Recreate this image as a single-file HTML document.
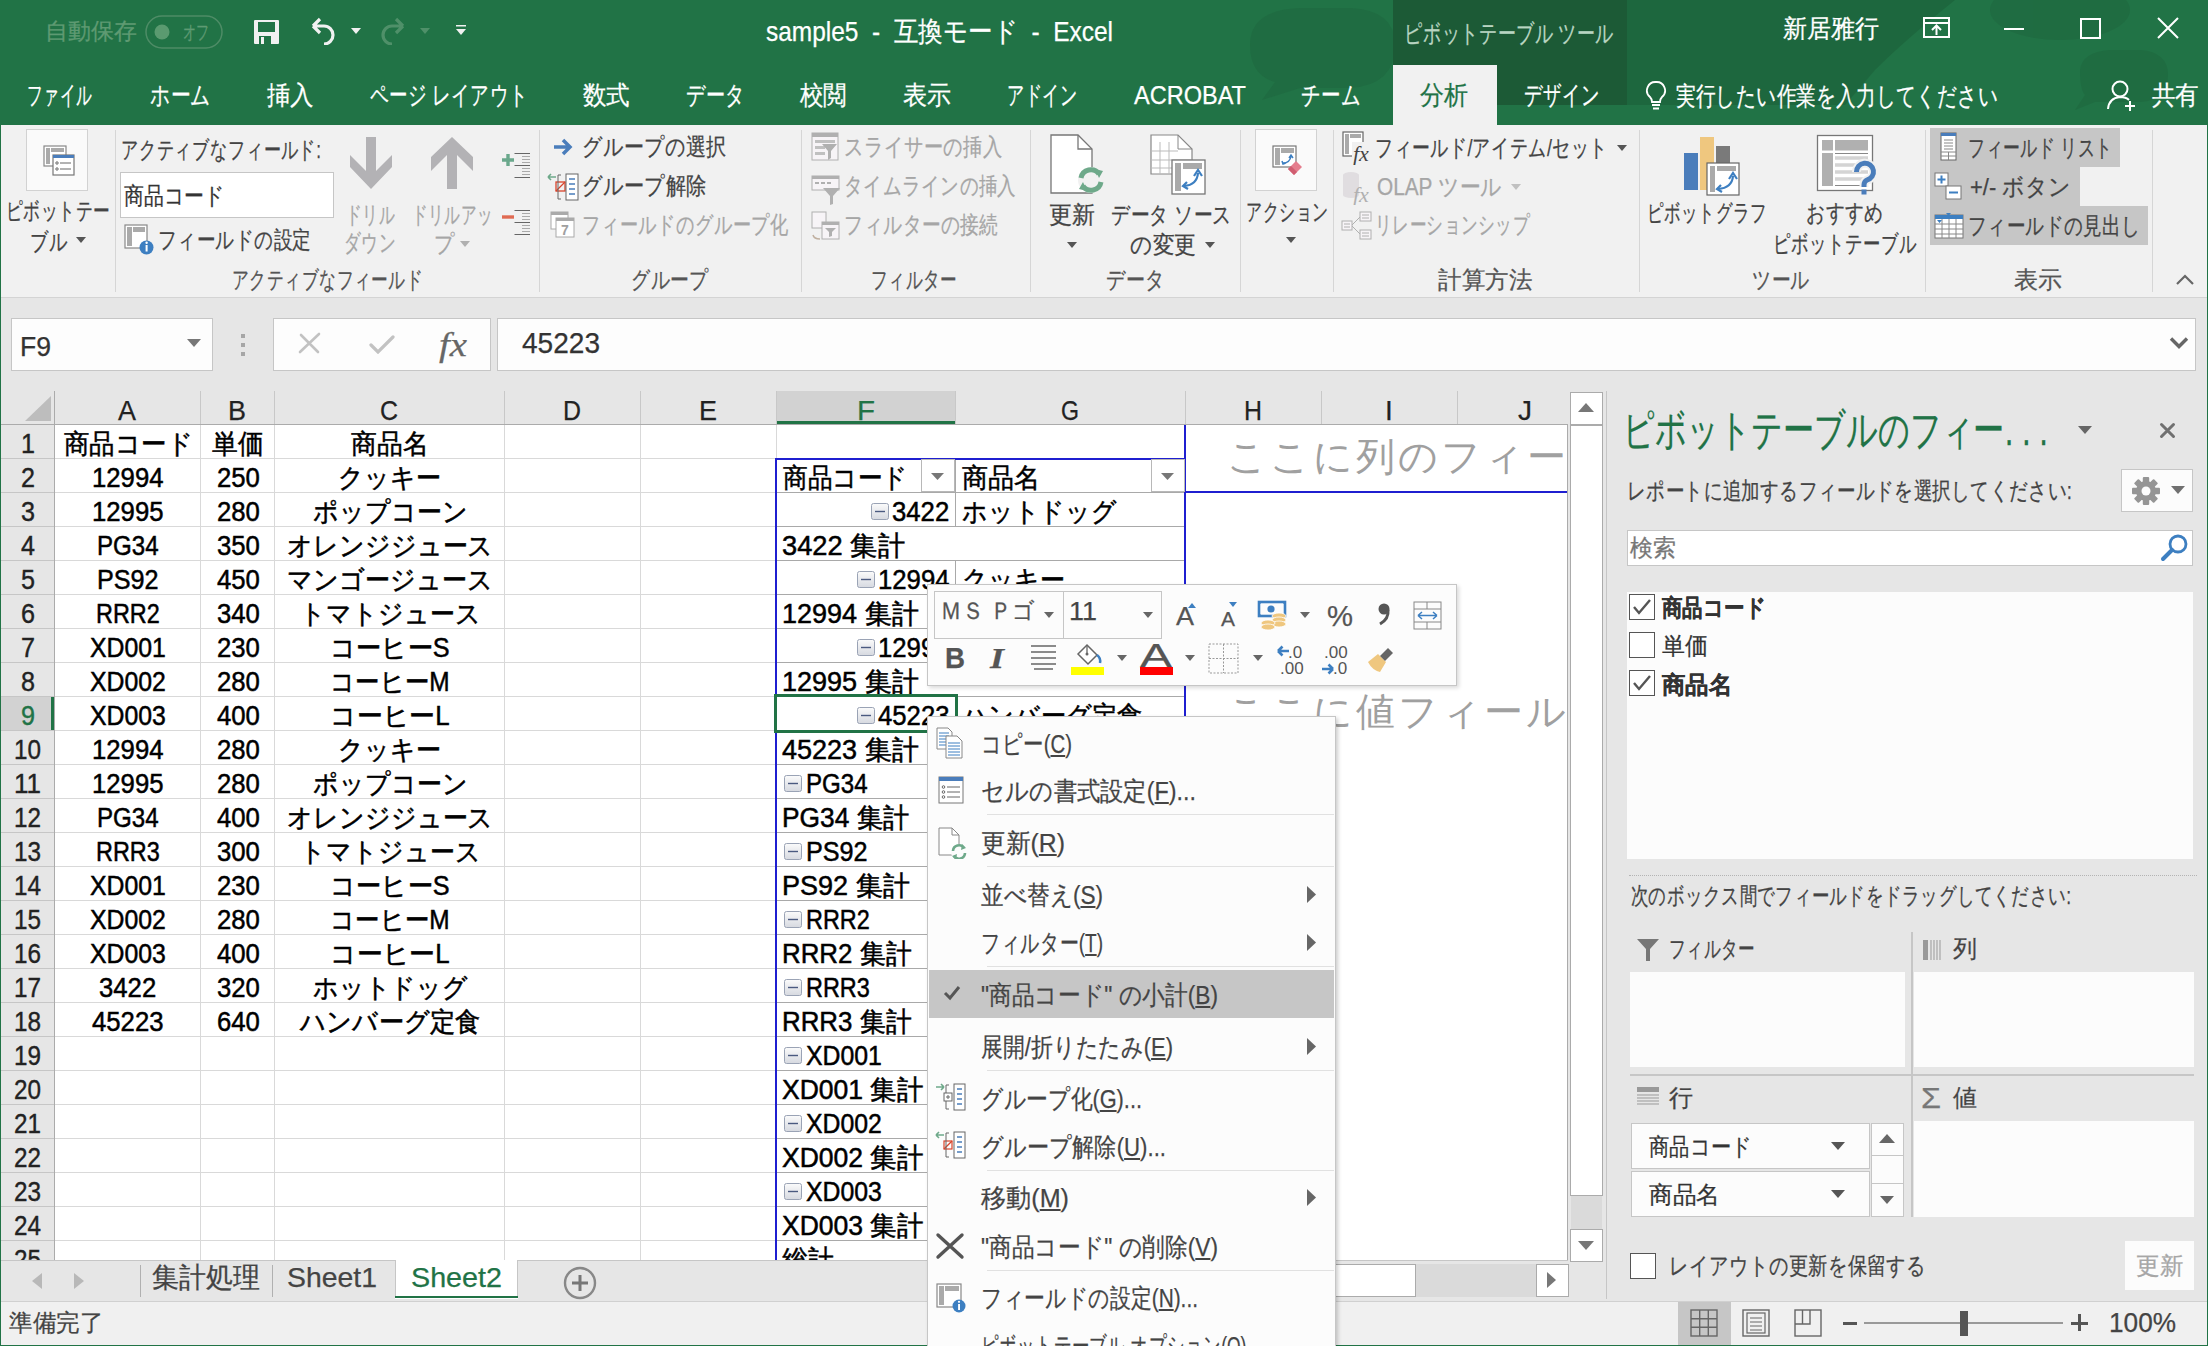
<!DOCTYPE html>
<html><head><meta charset="utf-8"><style>
html,body{margin:0;padding:0;}
body{width:2208px;height:1346px;position:relative;overflow:hidden;background:#fff;font-family:'Liberation Sans', sans-serif;}
.b{position:absolute;box-sizing:border-box;}
.t{position:absolute;white-space:pre;line-height:1;transform-origin:0 50%;}
</style></head><body>
<div class="b" style="left:0px;top:0px;width:2208px;height:1346px;background:#fff;"></div>
<div class="b" style="left:0px;top:0px;width:2208px;height:125px;background:#217346;"></div>
<svg class="b" style="left:0;top:0" width="2208" height="125"><g fill="#1d623b" opacity="0.4"><path d="M1250 45 Q1250 10 1300 8 H1350 Q1395 10 1395 45 Q1395 85 1350 88 H1300 L1262 100 L1275 82 Q1250 75 1250 45 Z"/><path d="M2080 70 Q2082 52 2110 50 H2140 Q2168 52 2168 75 Q2168 100 2140 102 H2095 L2075 110 L2085 95 Q2080 90 2080 70 Z"/><ellipse cx="2060" cy="10" rx="70" ry="30"/></g><path d="M1627 0 H1955 Q1905 40 1875 70 L1845 105 H1627 Z" fill="#1d623b" opacity="0.7"/></svg>
<div class="b" style="left:1393px;top:0px;width:234px;height:105px;background:#1c5a36;"></div>
<div class="b" style="left:1393px;top:65px;width:104px;height:60px;background:#f1f1f1;"></div>
<div class="b" style="left:0px;top:125px;width:2208px;height:172px;background:#f1f1f1;"></div>
<div class="b" style="left:0px;top:297px;width:2208px;height:1px;background:#d4d4d4;"></div>
<div class="b" style="left:0px;top:298px;width:2208px;height:93px;background:#e6e6e6;"></div>
<div class="t" style="top:19.5px;font-size:23px;color:#5e9a72;-webkit-text-stroke:0.25px #5e9a72;left:45.0px;">自動保存</div>
<svg class="b" style="left:145px;top:15px" width="78" height="34"><rect x="1" y="1" width="76" height="32" rx="16" fill="none" stroke="#4e8c66" stroke-width="1.5"/><circle cx="17" cy="17" r="7.5" fill="#5a9a70"/></svg>
<div class="t" style="top:22.0px;font-size:20px;color:#5e9a72;-webkit-text-stroke:0.25px #5e9a72;left:183.0px;transform:scaleX(0.6500);">オフ</div>
<svg class="b" style="left:253px;top:19px;" width="27" height="26" viewBox="0 0 27 26"><path d="M1 2 Q1 1 2 1 H25 Q26 1 26 2 V24 Q26 25 25 25 H2 Q1 25 1 24 Z" fill="#f1f1f1"/><rect x="5" y="3" width="17" height="10" fill="#217346"/><rect x="6" y="17" width="12" height="8" fill="#217346"/><rect x="8" y="18" width="3" height="7" fill="#f1f1f1"/></svg>
<svg class="b" style="left:309px;top:17px;" width="28" height="28" viewBox="0 0 28 28"><path d="M4 9 L11 2 M4 9 L11 16 M4 9 H15 A9 9 0 0 1 15 27" fill="none" stroke="#f1f1f1" stroke-width="3.2"/></svg>
<svg class="b" style="left:351px;top:28px;" width="11" height="7" viewBox="0 0 11 7"><path d="M0 0 H10 L5 6 Z" fill="#f1f1f1"/></svg>
<svg class="b" style="left:379px;top:17px;" width="28" height="28" viewBox="0 0 28 28"><path d="M24 9 L17 2 M24 9 L17 16 M24 9 H13 A9 9 0 0 0 13 27" fill="none" stroke="#4f9069" stroke-width="3.2"/></svg>
<svg class="b" style="left:420px;top:28px;" width="11" height="7" viewBox="0 0 11 7"><path d="M0 0 H10 L5 6 Z" fill="#4f9069"/></svg>
<svg class="b" style="left:456px;top:25px;" width="11" height="11" viewBox="0 0 11 11"><rect x="0" y="0" width="10" height="1.5" fill="#f1f1f1"/><path d="M0 4 H10 L5 10 Z" fill="#f1f1f1"/></svg>
<div class="t" style="top:18.0px;font-size:28px;color:#fff;-webkit-text-stroke:0.25px #fff;left:766.0px;transform:scaleX(0.8736);">sample5  -  互換モード  -  Excel</div>
<div class="t" style="top:20.5px;font-size:25px;color:#b9d5c2;-webkit-text-stroke:0.25px #b9d5c2;left:1404.0px;transform:scaleX(0.7218);">ピボットテーブル ツール</div>
<div class="t" style="top:15.5px;font-size:25px;color:#fff;-webkit-text-stroke:0.25px #fff;left:1783.0px;transform:scaleX(0.9600);">新居雅行</div>
<svg class="b" style="left:1923px;top:17px;" width="27" height="21" viewBox="0 0 27 21"><rect x="1" y="1" width="25" height="19" fill="none" stroke="#fff" stroke-width="2"/><path d="M1 6 H26" stroke="#fff" stroke-width="2"/><path d="M13.5 18 V9 M9 13 L13.5 8.5 L18 13" fill="none" stroke="#fff" stroke-width="2"/></svg>
<div class="b" style="left:2004px;top:28px;width:20px;height:2px;background:#fff;"></div>
<svg class="b" style="left:2080px;top:18px;" width="21" height="21" viewBox="0 0 21 21"><rect x="1" y="1" width="19" height="19" fill="none" stroke="#fff" stroke-width="2"/></svg>
<svg class="b" style="left:2157px;top:17px;" width="22" height="22" viewBox="0 0 22 22"><path d="M1 1 L21 21 M21 1 L1 21" stroke="#fff" stroke-width="2"/></svg>
<div class="t" style="top:82.0px;font-size:26px;color:#fff;-webkit-text-stroke:0.25px #fff;left:27.0px;transform:scaleX(0.6019);">ファイル</div>
<div class="t" style="top:82.0px;font-size:26px;color:#fff;-webkit-text-stroke:0.25px #fff;left:150.0px;transform:scaleX(0.7625);">ホーム</div>
<div class="t" style="top:82.0px;font-size:26px;color:#fff;-webkit-text-stroke:0.25px #fff;left:267.0px;transform:scaleX(0.9038);">挿入</div>
<div class="t" style="top:82.0px;font-size:26px;color:#fff;-webkit-text-stroke:0.25px #fff;left:370.0px;transform:scaleX(0.7110);">ページ レイアウト</div>
<div class="t" style="top:82.0px;font-size:26px;color:#fff;-webkit-text-stroke:0.25px #fff;left:583.0px;transform:scaleX(0.9038);">数式</div>
<div class="t" style="top:82.0px;font-size:26px;color:#fff;-webkit-text-stroke:0.25px #fff;left:686.0px;transform:scaleX(0.7375);">データ</div>
<div class="t" style="top:82.0px;font-size:26px;color:#fff;-webkit-text-stroke:0.25px #fff;left:800.0px;transform:scaleX(0.9038);">校閲</div>
<div class="t" style="top:82.0px;font-size:26px;color:#fff;-webkit-text-stroke:0.25px #fff;left:903.0px;transform:scaleX(0.9231);">表示</div>
<div class="t" style="top:82.0px;font-size:26px;color:#fff;-webkit-text-stroke:0.25px #fff;left:1007.0px;transform:scaleX(0.6574);">アドイン</div>
<div class="t" style="top:82.0px;font-size:26px;color:#fff;-webkit-text-stroke:0.25px #fff;left:1134.0px;transform:scaleX(0.9049);">ACROBAT</div>
<div class="t" style="top:82.0px;font-size:26px;color:#fff;-webkit-text-stroke:0.25px #fff;left:1301.0px;transform:scaleX(0.7500);">チーム</div>
<div class="t" style="top:82.0px;font-size:26px;color:#fff;-webkit-text-stroke:0.25px #fff;left:1524.0px;transform:scaleX(0.7037);">デザイン</div>
<div class="t" style="top:82.0px;font-size:26px;color:#217346;-webkit-text-stroke:0.25px #217346;left:1420.0px;transform:scaleX(0.9231);">分析</div>
<svg class="b" style="left:1645px;top:80px;" width="22" height="31" viewBox="0 0 22 31"><path d="M11 2 A8.5 8.5 0 0 0 5 17 Q7 19 7 22 H15 Q15 19 17 17 A8.5 8.5 0 0 0 11 2 Z" fill="none" stroke="#fff" stroke-width="1.8"/><path d="M7 25 H15 M8 28.5 H14" stroke="#fff" stroke-width="1.8"/></svg>
<div class="t" style="top:83.0px;font-size:26px;color:#fff;-webkit-text-stroke:0.25px #fff;left:1676.0px;transform:scaleX(0.7559);">実行したい作業を入力してください</div>
<svg class="b" style="left:2106px;top:79px;" width="33" height="33" viewBox="0 0 33 33"><circle cx="14" cy="10" r="7.5" fill="none" stroke="#fff" stroke-width="2"/><path d="M2 30 Q3 19 14 18 Q20 18 23 21" fill="none" stroke="#fff" stroke-width="2"/><path d="M24 22 V32 M19 27 H29" stroke="#fff" stroke-width="2"/></svg>
<div class="t" style="top:82.0px;font-size:26px;color:#fff;-webkit-text-stroke:0.25px #fff;left:2152.0px;transform:scaleX(0.9038);">共有</div>
<div class="b" style="left:115px;top:130px;width:1px;height:162px;background:#d6d6d6;"></div>
<div class="b" style="left:539px;top:130px;width:1px;height:162px;background:#d6d6d6;"></div>
<div class="b" style="left:801px;top:130px;width:1px;height:162px;background:#d6d6d6;"></div>
<div class="b" style="left:1030px;top:130px;width:1px;height:162px;background:#d6d6d6;"></div>
<div class="b" style="left:1240px;top:130px;width:1px;height:162px;background:#d6d6d6;"></div>
<div class="b" style="left:1333px;top:130px;width:1px;height:162px;background:#d6d6d6;"></div>
<div class="b" style="left:1639px;top:130px;width:1px;height:162px;background:#d6d6d6;"></div>
<div class="b" style="left:1925px;top:130px;width:1px;height:162px;background:#d6d6d6;"></div>
<div class="b" style="left:2152px;top:130px;width:1px;height:162px;background:#d6d6d6;"></div>
<div class="t" style="top:268.0px;font-size:24px;color:#555;-webkit-text-stroke:0.25px #555;left:231.5px;transform:scaleX(0.6971);">アクティブなフィールド</div>
<div class="t" style="top:268.0px;font-size:24px;color:#555;-webkit-text-stroke:0.25px #555;left:631.0px;transform:scaleX(0.7879);">グループ</div>
<div class="t" style="top:268.0px;font-size:24px;color:#555;-webkit-text-stroke:0.25px #555;left:871.0px;transform:scaleX(0.6935);">フィルター</div>
<div class="t" style="top:268.0px;font-size:24px;color:#555;-webkit-text-stroke:0.25px #555;left:1105.5px;transform:scaleX(0.7973);">データ</div>
<div class="t" style="top:268.0px;font-size:24px;color:#555;-webkit-text-stroke:0.25px #555;left:1438.0px;transform:scaleX(0.9792);">計算方法</div>
<div class="t" style="top:268.0px;font-size:24px;color:#555;-webkit-text-stroke:0.25px #555;left:1752.0px;transform:scaleX(0.7838);">ツール</div>
<div class="t" style="top:268.0px;font-size:24px;color:#555;-webkit-text-stroke:0.25px #555;left:2014.0px;">表示</div>
<div class="b" style="left:26px;top:129px;width:62px;height:62px;background:#fafafa;box-shadow:inset 0 0 0 1px #d2d2d2;"></div>
<svg class="b" style="left:43px;top:145px;" width="32" height="32" viewBox="0 0 32 32"><rect x="1" y="1" width="22" height="20" fill="#fff" stroke="#888" stroke-width="1.2"/><rect x="3" y="3" width="4" height="16" fill="#aaa"/><rect x="8" y="3" width="13" height="4" fill="#aaa"/><rect x="10" y="10" width="21" height="20" fill="#fff" stroke="#777" stroke-width="1.2"/><rect x="10" y="10" width="21" height="3" fill="#4a7dbb"/><circle cx="14" cy="18" r="1.2" fill="none" stroke="#666"/><circle cx="14" cy="24" r="1.2" fill="none" stroke="#666"/><path d="M17 18 H28 M17 24 H28" stroke="#666"/></svg>
<div class="t" style="top:199.0px;font-size:24px;color:#444;-webkit-text-stroke:0.25px #444;left:6.0px;transform:scaleX(0.6980);">ピボットテー</div>
<div class="t" style="top:230.0px;font-size:24px;color:#444;-webkit-text-stroke:0.25px #444;left:30.0px;transform:scaleX(0.7600);">ブル</div>
<svg class="b" style="left:76px;top:237px;" width="11" height="7" viewBox="0 0 11 7"><path d="M0 0 H10 L5 6 Z" fill="#555"/></svg>
<div class="t" style="top:138.0px;font-size:24px;color:#444;-webkit-text-stroke:0.25px #444;left:121.0px;transform:scaleX(0.7126);">アクティブなフィールド:</div>
<div class="b" style="left:120px;top:172px;width:214px;height:46px;background:#fff;box-shadow:inset 0 0 0 1px #c6c6c6;"></div>
<div class="t" style="top:184.0px;font-size:24px;color:#333;-webkit-text-stroke:0.25px #333;left:124.0px;transform:scaleX(0.8279);">商品コード</div>
<svg class="b" style="left:124px;top:224px;" width="32" height="32" viewBox="0 0 32 32"><rect x="1" y="1" width="22" height="23" fill="#fff" stroke="#888" stroke-width="1.2"/><rect x="3" y="3" width="5" height="19" fill="#aaa"/><rect x="9" y="3" width="12" height="5" fill="#aaa"/><circle cx="22.5" cy="23.5" r="7" fill="#3d7fc1"/><rect x="21.6" y="21" width="2" height="6.5" fill="#fff"/><circle cx="22.6" cy="18.8" r="1.2" fill="#fff"/></svg>
<div class="t" style="top:228.0px;font-size:24px;color:#444;-webkit-text-stroke:0.25px #444;left:158.0px;transform:scaleX(0.7766);">フィールドの設定</div>
<svg class="b" style="left:349px;top:136px;" width="44" height="54" viewBox="0 0 44 54"><path d="M17 1 H27 V35 L43 19 V31 L22 53 L1 31 V19 L17 35 Z" fill="#b3b2b5"/></svg>
<svg class="b" style="left:430px;top:136px;" width="44" height="54" viewBox="0 0 44 54"><path d="M17 53 H27 V19 L43 35 V21 L22 1 L1 21 V35 L17 19 Z" fill="#b3b2b5"/></svg>
<div class="t" style="top:203.0px;font-size:24px;color:#a6a6a6;-webkit-text-stroke:0.25px #a6a6a6;left:346.0px;transform:scaleX(0.6533);">ドリル</div>
<div class="t" style="top:231.0px;font-size:24px;color:#a6a6a6;-webkit-text-stroke:0.25px #a6a6a6;left:344.0px;transform:scaleX(0.6933);">ダウン</div>
<div class="t" style="top:203.0px;font-size:24px;color:#a6a6a6;-webkit-text-stroke:0.25px #a6a6a6;left:412.0px;transform:scaleX(0.6480);">ドリルアッ</div>
<div class="t" style="top:232.0px;font-size:24px;color:#a6a6a6;-webkit-text-stroke:0.25px #a6a6a6;left:434.0px;transform:scaleX(0.8400);">プ</div>
<svg class="b" style="left:460px;top:241px;" width="11" height="7" viewBox="0 0 11 7"><path d="M0 0 H10 L5 6 Z" fill="#b0b0b0"/></svg>
<svg class="b" style="left:500px;top:150px;" width="32" height="30" viewBox="0 0 32 30"><path d="M2 10 H14 M8 4 V16" stroke="#6aa88c" stroke-width="3.4"/><path d="M14.5 3.5 H30 M14.5 15.5 H30 M14.5 27.5 H30" stroke="#666" stroke-width="1"/><path d="M22 6.5 H30 M22 9.5 H30 M22 12.5 H30 M22 18.5 H30 M22 21.5 H30 M22 24.5 H30" stroke="#aaa" stroke-width="1"/></svg>
<svg class="b" style="left:500px;top:207px;" width="32" height="30" viewBox="0 0 32 30"><path d="M2 10 H14" stroke="#e06a52" stroke-width="3.4"/><path d="M14.5 3.5 H30 M14.5 15.5 H30 M14.5 27.5 H30" stroke="#666" stroke-width="1"/><path d="M22 6.5 H30 M22 9.5 H30 M22 12.5 H30 M22 18.5 H30 M22 21.5 H30 M22 24.5 H30" stroke="#aaa" stroke-width="1"/></svg>
<svg class="b" style="left:552px;top:137px;" width="22" height="20" viewBox="0 0 22 20"><path d="M2 10 H17 M11 3 L18 10 L11 17" fill="none" stroke="#4a7dbb" stroke-width="3.5"/></svg>
<div class="t" style="top:135.0px;font-size:24px;color:#444;-webkit-text-stroke:0.25px #444;left:582.0px;transform:scaleX(0.8372);">グループの選択</div>
<svg class="b" style="left:546px;top:172px;" width="34" height="30" viewBox="0 0 34 30"><path d="M2 5 H10 M2 5 L5 2 M2 5 L5 8" fill="none" stroke="#6ea98a" stroke-width="1.6"/><rect x="10" y="10" width="9" height="9" fill="none" stroke="#d9442b" stroke-width="1.3"/><path d="M10 19 L19 10" stroke="#d9442b" stroke-width="1.3"/><path d="M15 3 H12 V27 H15" fill="none" stroke="#666"/><rect x="20" y="2" width="12" height="26" fill="#fff" stroke="#666"/><path d="M23 7 H29 M23 12 H29 M23 17 H29 M23 22 H29" stroke="#4a7dbb" stroke-width="1.4"/></svg>
<div class="t" style="top:174.0px;font-size:24px;color:#444;-webkit-text-stroke:0.25px #444;left:582.0px;transform:scaleX(0.8435);">グループ解除</div>
<svg class="b" style="left:550px;top:211px;" width="28" height="28" viewBox="0 0 28 28"><rect x="1" y="1" width="17" height="17" fill="#fff" stroke="#aaa"/><rect x="1" y="1" width="17" height="3" fill="#aaa"/><rect x="6" y="7" width="18" height="19" fill="#fff" stroke="#aaa"/><rect x="6" y="7" width="18" height="3" fill="#aaa"/><text x="15" y="24" font-size="14" font-weight="bold" font-family="Liberation Sans" fill="#a0a0a0" text-anchor="middle">7</text></svg>
<div class="t" style="top:213.0px;font-size:24px;color:#a6a6a6;-webkit-text-stroke:0.25px #a6a6a6;left:582.0px;transform:scaleX(0.7574);">フィールドのグループ化</div>
<svg class="b" style="left:811px;top:132px;" width="28" height="30" viewBox="0 0 28 30"><rect x="1" y="1" width="26" height="27" fill="#f7f4f7" stroke="#b0b0b0"/><rect x="1" y="1" width="26" height="4" fill="#b0b0b0"/><rect x="4" y="8" width="20" height="3" fill="#c0c0c0"/><rect x="4" y="14" width="10" height="3" fill="#c0c0c0"/><rect x="4" y="20" width="10" height="3" fill="#c0c0c0"/><path d="M11 12 H26 L20 19 V26 L17 28 V19 Z" fill="#b0b0b0"/></svg>
<div class="t" style="top:135.0px;font-size:24px;color:#a6a6a6;-webkit-text-stroke:0.25px #a6a6a6;left:844.0px;transform:scaleX(0.8020);">スライサーの挿入</div>
<svg class="b" style="left:811px;top:175px;" width="30" height="30" viewBox="0 0 30 30"><rect x="1" y="1" width="27" height="14" fill="#f7f4f7" stroke="#b0b0b0"/><rect x="1" y="1" width="27" height="3" fill="#b0b0b0"/><path d="M4 8 H8 M10 8 H14 M16 8 H20" stroke="#b0b0b0" stroke-width="2"/><path d="M12 13 H29 L22 21 V29 L19 30 V21 Z" fill="#b0b0b0"/></svg>
<div class="t" style="top:174.0px;font-size:24px;color:#a6a6a6;-webkit-text-stroke:0.25px #a6a6a6;left:844.0px;transform:scaleX(0.7713);">タイムラインの挿入</div>
<svg class="b" style="left:811px;top:211px;" width="30" height="30" viewBox="0 0 30 30"><rect x="1" y="1" width="14" height="16" fill="#f7f4f7" stroke="#b0b0b0"/><rect x="11" y="11" width="17" height="17" fill="#f7f4f7" stroke="#b0b0b0"/><rect x="11" y="11" width="17" height="3" fill="#b0b0b0"/><path d="M14 17 H25 L21 21 V25 L18 26 V21 Z" fill="#b0b0b0"/><path d="M2 24 Q3 28 9 28" fill="none" stroke="#c0b0a0" stroke-width="1.5"/></svg>
<div class="t" style="top:213.0px;font-size:24px;color:#a6a6a6;-webkit-text-stroke:0.25px #a6a6a6;left:844.0px;transform:scaleX(0.7817);">フィルターの接続</div>
<svg class="b" style="left:1050px;top:134px;" width="56" height="62" viewBox="0 0 56 62"><path d="M1 1 H28 L42 15 V59 H1 Z" fill="#fff" stroke="#777" stroke-width="1.3"/><path d="M28 1 V15 H42" fill="none" stroke="#777" stroke-width="1.3"/><circle cx="41" cy="46" r="13" fill="#f1f1f1"/><path d="M31 44 A10 10 0 0 1 49 40" fill="none" stroke="#6ea98a" stroke-width="5"/><path d="M51 48 A10 10 0 0 1 33 52" fill="none" stroke="#6ea98a" stroke-width="5"/><path d="M45 35 L53 37 L49 44 Z M37 57 L29 55 L33 48 Z" fill="#6ea98a"/></svg>
<div class="t" style="top:203.0px;font-size:24px;color:#444;-webkit-text-stroke:0.25px #444;left:1049.0px;transform:scaleX(0.9583);">更新</div>
<svg class="b" style="left:1067px;top:242px;" width="11" height="7" viewBox="0 0 11 7"><path d="M0 0 H10 L5 6 Z" fill="#555"/></svg>
<svg class="b" style="left:1150px;top:134px;" width="56" height="62" viewBox="0 0 56 62"><path d="M1 1 H28 L42 15 V40 H1 Z" fill="#fff" stroke="#888" stroke-width="1.2"/><path d="M28 1 V15 H42" fill="none" stroke="#888"/><path d="M10 8 V40 M19 8 V40 M1 17 H28 M1 26 H42 M1 34 H42" stroke="#bbb"/><rect x="22" y="26" width="33" height="34" fill="#fff" stroke="#777" stroke-width="1.3"/><rect x="25" y="29" width="6" height="28" fill="#aaa"/><rect x="33" y="29" width="19" height="6" fill="#aaa"/><path d="M34 52 Q47 51 48 39" fill="none" stroke="#3d7fc1" stroke-width="2.2"/><path d="M44 42 L48 36 L52 42 M37 48 L33 52 L38 55" fill="none" stroke="#3d7fc1" stroke-width="2.2"/></svg>
<div class="t" style="top:203.0px;font-size:24px;color:#444;-webkit-text-stroke:0.25px #444;left:1111.0px;transform:scaleX(0.7823);">データ ソース</div>
<div class="t" style="top:233.0px;font-size:24px;color:#444;-webkit-text-stroke:0.25px #444;left:1130.0px;transform:scaleX(0.9041);">の変更</div>
<svg class="b" style="left:1205px;top:242px;" width="11" height="7" viewBox="0 0 11 7"><path d="M0 0 H10 L5 6 Z" fill="#555"/></svg>
<div class="b" style="left:1255px;top:129px;width:62px;height:62px;background:#fafafa;box-shadow:inset 0 0 0 1px #d2d2d2;"></div>
<svg class="b" style="left:1272px;top:145px;" width="30" height="30" viewBox="0 0 30 30"><rect x="1" y="1" width="23" height="21" fill="#fff" stroke="#777" stroke-width="1.2"/><rect x="3" y="3" width="5" height="17" fill="#aaa"/><rect x="9" y="3" width="13" height="5" fill="#aaa"/><path d="M11 18 Q18 18 19 11 M17 13 L19 10 L21 13 M10 16 L11 19 L14 18" fill="none" stroke="#3d7fc1" stroke-width="1.5"/><path d="M16 24 L24 16 L30 22 L22 30 Z" fill="#e57d8d"/><path d="M16 24 L19 21 L25 27 L22 30 Z" fill="#d05d70"/></svg>
<div class="t" style="top:200.0px;font-size:24px;color:#444;-webkit-text-stroke:0.25px #444;left:1246.0px;transform:scaleX(0.6640);">アクション</div>
<svg class="b" style="left:1286px;top:237px;" width="11" height="7" viewBox="0 0 11 7"><path d="M0 0 H10 L5 6 Z" fill="#555"/></svg>
<svg class="b" style="left:1342px;top:131px;" width="32" height="34" viewBox="0 0 32 34"><rect x="1" y="1" width="20" height="24" fill="#fff" stroke="#666" stroke-width="1.2"/><rect x="3" y="3" width="4" height="20" fill="#aaa"/><rect x="8" y="3" width="11" height="4" fill="#aaa"/><rect x="10" y="11" width="22" height="22" fill="#f1f1f1"/><text x="11" y="30" font-size="22" font-style="italic" font-family="Liberation Serif" fill="#444">fx</text></svg>
<div class="t" style="top:136.0px;font-size:24px;color:#444;-webkit-text-stroke:0.25px #444;left:1375.0px;transform:scaleX(0.7460);">フィールド/アイテム/セット</div>
<svg class="b" style="left:1617px;top:145px;" width="11" height="7" viewBox="0 0 11 7"><path d="M0 0 H10 L5 6 Z" fill="#555"/></svg>
<svg class="b" style="left:1342px;top:171px;" width="34" height="34" viewBox="0 0 34 34"><ellipse cx="9" cy="4" rx="8" ry="3" fill="#e0dde0"/><rect x="1" y="4" width="16" height="20" fill="#e0dde0"/><ellipse cx="9" cy="24" rx="8" ry="3" fill="#e0dde0"/><text x="11" y="31" font-size="22" font-style="italic" font-family="Liberation Serif" fill="#b0b0b0">fx</text></svg>
<div class="t" style="top:175.0px;font-size:24px;color:#a6a6a6;-webkit-text-stroke:0.25px #a6a6a6;left:1377.0px;transform:scaleX(0.8665);">OLAP ツール</div>
<svg class="b" style="left:1511px;top:184px;" width="11" height="7" viewBox="0 0 11 7"><path d="M0 0 H10 L5 6 Z" fill="#c0c0c0"/></svg>
<svg class="b" style="left:1341px;top:211px;" width="32" height="30" viewBox="0 0 32 30"><rect x="1" y="10" width="10" height="9" fill="#f7f4f7" stroke="#b0b0b0"/><rect x="19" y="1" width="11" height="9" fill="#f7f4f7" stroke="#b0b0b0"/><rect x="19" y="19" width="11" height="9" fill="#f7f4f7" stroke="#b0b0b0"/><path d="M11 14 L19 6 M11 15 L19 23" stroke="#b0b0b0"/><path d="M3 13 H9 M3 16 H9 M21 4 H28 M21 7 H28 M21 22 H28 M21 25 H28" stroke="#b0b0b0"/></svg>
<div class="t" style="top:213.0px;font-size:24px;color:#a6a6a6;-webkit-text-stroke:0.25px #a6a6a6;left:1375.0px;transform:scaleX(0.6920);">リレーションシップ</div>
<svg class="b" style="left:1683px;top:136px;" width="57" height="60" viewBox="0 0 57 60"><rect x="1" y="17" width="14" height="37" fill="#4a7dbb"/><rect x="17" y="1" width="14" height="53" fill="#efc77f"/><rect x="33" y="10" width="14" height="17" fill="#7a7a7a"/><rect x="24" y="27" width="32" height="32" fill="#fff" stroke="#666" stroke-width="1.2"/><rect x="27" y="30" width="5" height="26" fill="#aaa"/><rect x="34" y="30" width="19" height="5" fill="#aaa"/><path d="M35 53 Q49 52 50 40" fill="none" stroke="#3d7fc1" stroke-width="2.2"/><path d="M46 43 L50 37 L54 43 M38 49 L34 53 L39 56" fill="none" stroke="#3d7fc1" stroke-width="2.2"/></svg>
<div class="t" style="top:201.0px;font-size:24px;color:#444;-webkit-text-stroke:0.25px #444;left:1647.0px;transform:scaleX(0.6857);">ピボットグラフ</div>
<svg class="b" style="left:1816px;top:134px;" width="62" height="62" viewBox="0 0 62 62"><rect x="1.5" y="1.5" width="55" height="55" fill="#fff" stroke="#777" stroke-width="1.3"/><rect x="6" y="6" width="11" height="10.5" fill="#b0b0b0"/><rect x="19" y="6" width="33" height="10.5" fill="#b0b0b0"/><rect x="6" y="19" width="11" height="33" fill="#b0b0b0"/><path d="M19 19.5 H52 M19 51.5 H52" stroke="#888" stroke-width="1"/><path d="M19 24 H52 M19 31 H52 M19 38 H52 M19 45 H52" stroke="#d4d4d4" stroke-width="3.5"/><g transform="translate(37,28)"><path d="M3.5 10 A8.5 8.5 0 1 1 14 18 Q11 19.5 11 23 V25" fill="none" stroke="#f1f1f1" stroke-width="9"/><path d="M3.5 10 A8.5 8.5 0 1 1 14 18 Q11 19.5 11 23 V25" fill="none" stroke="#4a7dbb" stroke-width="5"/><rect x="8.5" y="27.5" width="5" height="5" fill="#4a7dbb"/></g></svg>
<div class="t" style="top:201.0px;font-size:24px;color:#444;-webkit-text-stroke:0.25px #444;left:1806.0px;transform:scaleX(0.7800);">おすすめ</div>
<div class="t" style="top:232.0px;font-size:24px;color:#444;-webkit-text-stroke:0.25px #444;left:1773.0px;transform:scaleX(0.7236);">ピボットテーブル</div>
<div class="b" style="left:1930px;top:128px;width:190px;height:39px;background:#c6c6c6;"></div>
<div class="b" style="left:1930px;top:167px;width:150px;height:39px;background:#c6c6c6;"></div>
<div class="b" style="left:1930px;top:206px;width:218px;height:39px;background:#c6c6c6;"></div>
<svg class="b" style="left:1940px;top:132px;" width="18" height="30" viewBox="0 0 18 30"><rect x="1" y="1" width="15" height="27" fill="#fff" stroke="#666"/><rect x="1" y="1" width="15" height="3" fill="#4a7dbb"/><path d="M4 8 H13 M4 11 H13 M4 14 H13 M4 17 H13 M1 20 H16 M1 24 H16 M8.5 20 V28" stroke="#888"/></svg>
<div class="t" style="top:136.0px;font-size:24px;color:#444;-webkit-text-stroke:0.25px #444;left:1968.0px;transform:scaleX(0.7050);">フィールド リスト</div>
<svg class="b" style="left:1934px;top:172px;" width="30" height="30" viewBox="0 0 30 30"><rect x="1" y="1" width="13" height="13" fill="#fff" stroke="#777"/><path d="M3.5 7.5 H11.5 M7.5 3.5 V11.5" stroke="#3d7fc1" stroke-width="2"/><rect x="12" y="14" width="15" height="13" fill="#fff" stroke="#777"/><path d="M15 20.5 H24" stroke="#3d7fc1" stroke-width="2"/></svg>
<div class="t" style="top:175.0px;font-size:24px;color:#444;-webkit-text-stroke:0.25px #444;left:1970.0px;transform:scaleX(0.9153);">+/- ボタン</div>
<svg class="b" style="left:1934px;top:211px;" width="31" height="29" viewBox="0 0 31 29"><rect x="1" y="4" width="28" height="23" fill="#fff" stroke="#777"/><rect x="1" y="4" width="28" height="4" fill="#3d7fc1"/><path d="M1 13 H29 M1 18 H29 M1 23 H29 M8 8 V27 M15 8 V27 M22 8 V27" stroke="#888"/><path d="M3 9 H8 L5.5 12 Z M12 2 H17 L14.5 5 Z" fill="#3d7fc1"/></svg>
<div class="t" style="top:214.0px;font-size:24px;color:#444;-webkit-text-stroke:0.25px #444;left:1968.0px;transform:scaleX(0.7748);">フィールドの見出し</div>
<svg class="b" style="left:2176px;top:274px;" width="18" height="11" viewBox="0 0 18 11"><path d="M1 10 L9 2 L17 10" fill="none" stroke="#666" stroke-width="2.2"/></svg>
<div class="b" style="left:11px;top:318px;width:202px;height:53px;background:#fdfdfd;box-shadow:inset 0 0 0 1px #c6c6c6;"></div>
<div class="t" style="top:333.0px;font-size:28px;color:#333;-webkit-text-stroke:0.25px #333;left:20.0px;transform:scaleX(0.9484);">F9</div>
<svg class="b" style="left:187px;top:339px;" width="15" height="9" viewBox="0 0 15 9"><path d="M0 0 H14 L7 8 Z" fill="#777"/></svg>
<div class="b" style="left:241px;top:334px;width:4px;height:4px;background:#a6a6a6;"></div>
<div class="b" style="left:241px;top:343px;width:4px;height:4px;background:#a6a6a6;"></div>
<div class="b" style="left:241px;top:352px;width:4px;height:4px;background:#a6a6a6;"></div>
<div class="b" style="left:273px;top:318px;width:218px;height:53px;background:#fdfdfd;box-shadow:inset 0 0 0 1px #c6c6c6;"></div>
<svg class="b" style="left:298px;top:332px;" width="24" height="22" viewBox="0 0 24 22"><path d="M2 20 L21 2 M3 3 L20 20" stroke="#c2c2c2" stroke-width="2.6" stroke-linecap="round"/></svg>
<svg class="b" style="left:369px;top:334px;" width="26" height="20" viewBox="0 0 26 20"><path d="M2 11 L9 18 L24 3" fill="none" stroke="#c2c2c2" stroke-width="3.2" stroke-linecap="round"/></svg>
<div class="t" style="top:328.0px;font-size:34px;color:#666;font-style:italic;font-family:'Liberation Serif', serif;-webkit-text-stroke:0.25px #666;left:439.0px;transform:scaleX(1.1407);">fx</div>
<div class="b" style="left:497px;top:318px;width:1699px;height:53px;background:#fdfdfd;box-shadow:inset 0 0 0 1px #c6c6c6;"></div>
<div class="t" style="top:328.0px;font-size:30px;color:#333;-webkit-text-stroke:0.25px #333;left:522.0px;transform:scaleX(0.9348);">45223</div>
<svg class="b" style="left:2169px;top:336px;" width="20" height="14" viewBox="0 0 20 14"><path d="M2 2.5 L10 10.5 L18 2.5" fill="none" stroke="#666" stroke-width="3.4"/></svg>
<div class="b" style="left:1px;top:391px;width:1567px;height:34px;background:#e6e6e6;"></div>
<div class="b" style="left:1px;top:425px;width:53px;height:835px;background:#e6e6e6;"></div>
<div class="b" style="left:776px;top:391px;width:179px;height:34px;background:#d2d2d2;"></div>
<div class="b" style="left:776px;top:421px;width:179px;height:3px;background:#217346;"></div>
<div class="b" style="left:1px;top:424px;width:1567px;height:1px;background:#ababab;"></div>
<div class="b" style="left:54px;top:391px;width:1px;height:869px;background:#ababab;"></div>
<svg class="b" style="left:24px;top:395px;" width="28" height="27" viewBox="0 0 28 27"><path d="M27 1 V26 H1 Z" fill="#bdbdbd"/></svg>
<div class="t" style="top:397.0px;font-size:28px;color:#222;-webkit-text-stroke:0.25px #222;left:118.0px;transform:scaleX(0.9632);">A</div>
<div class="b" style="left:200px;top:391px;width:1px;height:33px;background:#c8c8c8;"></div>
<div class="t" style="top:397.0px;font-size:28px;color:#222;-webkit-text-stroke:0.25px #222;left:228.0px;transform:scaleX(0.9632);">B</div>
<div class="b" style="left:274px;top:391px;width:1px;height:33px;background:#c8c8c8;"></div>
<div class="t" style="top:397.0px;font-size:28px;color:#222;-webkit-text-stroke:0.25px #222;left:380.0px;transform:scaleX(0.8896);">C</div>
<div class="b" style="left:504px;top:391px;width:1px;height:33px;background:#c8c8c8;"></div>
<div class="t" style="top:397.0px;font-size:28px;color:#222;-webkit-text-stroke:0.25px #222;left:563.0px;transform:scaleX(0.8896);">D</div>
<div class="b" style="left:640px;top:391px;width:1px;height:33px;background:#c8c8c8;"></div>
<div class="t" style="top:397.0px;font-size:28px;color:#222;-webkit-text-stroke:0.25px #222;left:699.0px;transform:scaleX(0.9632);">E</div>
<div class="b" style="left:776px;top:391px;width:1px;height:33px;background:#c8c8c8;"></div>
<div class="t" style="top:397.0px;font-size:28px;color:#217346;-webkit-text-stroke:0.25px #217346;left:856.5px;transform:scaleX(1.0521);">F</div>
<div class="b" style="left:955px;top:391px;width:1px;height:33px;background:#c8c8c8;"></div>
<div class="t" style="top:397.0px;font-size:28px;color:#222;-webkit-text-stroke:0.25px #222;left:1061.0px;transform:scaleX(0.8264);">G</div>
<div class="b" style="left:1185px;top:391px;width:1px;height:33px;background:#c8c8c8;"></div>
<div class="t" style="top:397.0px;font-size:28px;color:#222;-webkit-text-stroke:0.25px #222;left:1244.0px;transform:scaleX(0.8896);">H</div>
<div class="b" style="left:1321px;top:391px;width:1px;height:33px;background:#c8c8c8;"></div>
<div class="t" style="top:397.0px;font-size:28px;color:#222;-webkit-text-stroke:0.25px #222;left:1385.1px;">I</div>
<div class="b" style="left:1457px;top:391px;width:1px;height:33px;background:#c8c8c8;"></div>
<div class="t" style="top:397.0px;font-size:28px;color:#222;-webkit-text-stroke:0.25px #222;left:1518.0px;">J</div>
<div class="b" style="left:1px;top:697px;width:53px;height:33px;background:#d2d2d2;"></div>
<div class="b" style="left:51px;top:696px;width:3px;height:35px;background:#217346;"></div>
<div class="b" style="left:1px;top:458px;width:53px;height:1px;background:#c6c6c6;"></div>
<div class="b" style="left:55px;top:458px;width:721px;height:1px;background:#d9d9d9;"></div>
<div class="b" style="left:1px;top:492px;width:53px;height:1px;background:#c6c6c6;"></div>
<div class="b" style="left:55px;top:492px;width:721px;height:1px;background:#d9d9d9;"></div>
<div class="b" style="left:1px;top:526px;width:53px;height:1px;background:#c6c6c6;"></div>
<div class="b" style="left:55px;top:526px;width:721px;height:1px;background:#d9d9d9;"></div>
<div class="b" style="left:1px;top:560px;width:53px;height:1px;background:#c6c6c6;"></div>
<div class="b" style="left:55px;top:560px;width:721px;height:1px;background:#d9d9d9;"></div>
<div class="b" style="left:1px;top:594px;width:53px;height:1px;background:#c6c6c6;"></div>
<div class="b" style="left:55px;top:594px;width:721px;height:1px;background:#d9d9d9;"></div>
<div class="b" style="left:1px;top:628px;width:53px;height:1px;background:#c6c6c6;"></div>
<div class="b" style="left:55px;top:628px;width:721px;height:1px;background:#d9d9d9;"></div>
<div class="b" style="left:1px;top:662px;width:53px;height:1px;background:#c6c6c6;"></div>
<div class="b" style="left:55px;top:662px;width:721px;height:1px;background:#d9d9d9;"></div>
<div class="b" style="left:1px;top:696px;width:53px;height:1px;background:#c6c6c6;"></div>
<div class="b" style="left:55px;top:696px;width:721px;height:1px;background:#d9d9d9;"></div>
<div class="b" style="left:1px;top:730px;width:53px;height:1px;background:#c6c6c6;"></div>
<div class="b" style="left:55px;top:730px;width:721px;height:1px;background:#d9d9d9;"></div>
<div class="b" style="left:1px;top:764px;width:53px;height:1px;background:#c6c6c6;"></div>
<div class="b" style="left:55px;top:764px;width:721px;height:1px;background:#d9d9d9;"></div>
<div class="b" style="left:1px;top:798px;width:53px;height:1px;background:#c6c6c6;"></div>
<div class="b" style="left:55px;top:798px;width:721px;height:1px;background:#d9d9d9;"></div>
<div class="b" style="left:1px;top:832px;width:53px;height:1px;background:#c6c6c6;"></div>
<div class="b" style="left:55px;top:832px;width:721px;height:1px;background:#d9d9d9;"></div>
<div class="b" style="left:1px;top:866px;width:53px;height:1px;background:#c6c6c6;"></div>
<div class="b" style="left:55px;top:866px;width:721px;height:1px;background:#d9d9d9;"></div>
<div class="b" style="left:1px;top:900px;width:53px;height:1px;background:#c6c6c6;"></div>
<div class="b" style="left:55px;top:900px;width:721px;height:1px;background:#d9d9d9;"></div>
<div class="b" style="left:1px;top:934px;width:53px;height:1px;background:#c6c6c6;"></div>
<div class="b" style="left:55px;top:934px;width:721px;height:1px;background:#d9d9d9;"></div>
<div class="b" style="left:1px;top:968px;width:53px;height:1px;background:#c6c6c6;"></div>
<div class="b" style="left:55px;top:968px;width:721px;height:1px;background:#d9d9d9;"></div>
<div class="b" style="left:1px;top:1002px;width:53px;height:1px;background:#c6c6c6;"></div>
<div class="b" style="left:55px;top:1002px;width:721px;height:1px;background:#d9d9d9;"></div>
<div class="b" style="left:1px;top:1036px;width:53px;height:1px;background:#c6c6c6;"></div>
<div class="b" style="left:55px;top:1036px;width:721px;height:1px;background:#d9d9d9;"></div>
<div class="b" style="left:1px;top:1070px;width:53px;height:1px;background:#c6c6c6;"></div>
<div class="b" style="left:55px;top:1070px;width:721px;height:1px;background:#d9d9d9;"></div>
<div class="b" style="left:1px;top:1104px;width:53px;height:1px;background:#c6c6c6;"></div>
<div class="b" style="left:55px;top:1104px;width:721px;height:1px;background:#d9d9d9;"></div>
<div class="b" style="left:1px;top:1138px;width:53px;height:1px;background:#c6c6c6;"></div>
<div class="b" style="left:55px;top:1138px;width:721px;height:1px;background:#d9d9d9;"></div>
<div class="b" style="left:1px;top:1172px;width:53px;height:1px;background:#c6c6c6;"></div>
<div class="b" style="left:55px;top:1172px;width:721px;height:1px;background:#d9d9d9;"></div>
<div class="b" style="left:1px;top:1206px;width:53px;height:1px;background:#c6c6c6;"></div>
<div class="b" style="left:55px;top:1206px;width:721px;height:1px;background:#d9d9d9;"></div>
<div class="b" style="left:1px;top:1240px;width:53px;height:1px;background:#c6c6c6;"></div>
<div class="b" style="left:55px;top:1240px;width:721px;height:1px;background:#d9d9d9;"></div>
<div class="b" style="left:1px;top:1274px;width:53px;height:1px;background:#c6c6c6;"></div>
<div class="b" style="left:55px;top:1274px;width:721px;height:1px;background:#d9d9d9;"></div>
<div class="b" style="left:200px;top:425px;width:1px;height:835px;background:#d9d9d9;"></div>
<div class="b" style="left:274px;top:425px;width:1px;height:835px;background:#d9d9d9;"></div>
<div class="b" style="left:504px;top:425px;width:1px;height:835px;background:#d9d9d9;"></div>
<div class="b" style="left:640px;top:425px;width:1px;height:835px;background:#d9d9d9;"></div>
<div class="b" style="left:776px;top:425px;width:1px;height:835px;background:#d9d9d9;"></div>
<div class="b" style="left:776px;top:458px;width:409px;height:1px;background:#d9d9d9;"></div>
<div class="t" style="top:430.0px;font-size:28px;color:#222;-webkit-text-stroke:0.4px #222;left:20.5px;transform:scaleX(0.8987);">1</div>
<div class="t" style="top:464.0px;font-size:28px;color:#222;-webkit-text-stroke:0.4px #222;left:20.5px;transform:scaleX(0.8987);">2</div>
<div class="t" style="top:498.0px;font-size:28px;color:#222;-webkit-text-stroke:0.4px #222;left:20.5px;transform:scaleX(0.8987);">3</div>
<div class="t" style="top:532.0px;font-size:28px;color:#222;-webkit-text-stroke:0.4px #222;left:20.5px;transform:scaleX(0.8987);">4</div>
<div class="t" style="top:566.0px;font-size:28px;color:#222;-webkit-text-stroke:0.4px #222;left:20.5px;transform:scaleX(0.8987);">5</div>
<div class="t" style="top:600.0px;font-size:28px;color:#222;-webkit-text-stroke:0.4px #222;left:20.5px;transform:scaleX(0.8987);">6</div>
<div class="t" style="top:634.0px;font-size:28px;color:#222;-webkit-text-stroke:0.4px #222;left:20.5px;transform:scaleX(0.8987);">7</div>
<div class="t" style="top:668.0px;font-size:28px;color:#222;-webkit-text-stroke:0.4px #222;left:20.5px;transform:scaleX(0.8987);">8</div>
<div class="t" style="top:702.0px;font-size:28px;color:#217346;-webkit-text-stroke:0.4px #217346;left:20.5px;transform:scaleX(0.8987);">9</div>
<div class="t" style="top:736.0px;font-size:28px;color:#222;-webkit-text-stroke:0.4px #222;left:14.0px;transform:scaleX(0.8666);">10</div>
<div class="t" style="top:770.0px;font-size:28px;color:#222;-webkit-text-stroke:0.4px #222;left:14.0px;transform:scaleX(0.9285);">11</div>
<div class="t" style="top:804.0px;font-size:28px;color:#222;-webkit-text-stroke:0.4px #222;left:14.0px;transform:scaleX(0.8666);">12</div>
<div class="t" style="top:838.0px;font-size:28px;color:#222;-webkit-text-stroke:0.4px #222;left:14.0px;transform:scaleX(0.8666);">13</div>
<div class="t" style="top:872.0px;font-size:28px;color:#222;-webkit-text-stroke:0.4px #222;left:14.0px;transform:scaleX(0.8666);">14</div>
<div class="t" style="top:906.0px;font-size:28px;color:#222;-webkit-text-stroke:0.4px #222;left:14.0px;transform:scaleX(0.8666);">15</div>
<div class="t" style="top:940.0px;font-size:28px;color:#222;-webkit-text-stroke:0.4px #222;left:14.0px;transform:scaleX(0.8666);">16</div>
<div class="t" style="top:974.0px;font-size:28px;color:#222;-webkit-text-stroke:0.4px #222;left:14.0px;transform:scaleX(0.8666);">17</div>
<div class="t" style="top:1008.0px;font-size:28px;color:#222;-webkit-text-stroke:0.4px #222;left:14.0px;transform:scaleX(0.8666);">18</div>
<div class="t" style="top:1042.0px;font-size:28px;color:#222;-webkit-text-stroke:0.4px #222;left:14.0px;transform:scaleX(0.8666);">19</div>
<div class="t" style="top:1076.0px;font-size:28px;color:#222;-webkit-text-stroke:0.4px #222;left:14.0px;transform:scaleX(0.8666);">20</div>
<div class="t" style="top:1110.0px;font-size:28px;color:#222;-webkit-text-stroke:0.4px #222;left:14.0px;transform:scaleX(0.8666);">21</div>
<div class="t" style="top:1144.0px;font-size:28px;color:#222;-webkit-text-stroke:0.4px #222;left:14.0px;transform:scaleX(0.8666);">22</div>
<div class="t" style="top:1178.0px;font-size:28px;color:#222;-webkit-text-stroke:0.4px #222;left:14.0px;transform:scaleX(0.8666);">23</div>
<div class="t" style="top:1212.0px;font-size:28px;color:#222;-webkit-text-stroke:0.4px #222;left:14.0px;transform:scaleX(0.8666);">24</div>
<div class="t" style="top:1246.0px;font-size:28px;color:#222;-webkit-text-stroke:0.4px #222;left:14.0px;transform:scaleX(0.8666);">25</div>
<div class="t" style="top:430.5px;font-size:27px;color:#000;-webkit-text-stroke:0.5px #000;left:63.5px;transform:scaleX(0.9416);">商品コード</div>
<div class="t" style="top:430.5px;font-size:27px;color:#000;-webkit-text-stroke:0.5px #000;left:212.2px;transform:scaleX(0.9556);">単価</div>
<div class="t" style="top:430.5px;font-size:27px;color:#000;-webkit-text-stroke:0.5px #000;left:351.3px;transform:scaleX(0.9556);">商品名</div>
<div class="t" style="top:464.5px;font-size:27px;color:#000;-webkit-text-stroke:0.5px #000;left:92.2px;transform:scaleX(0.9521);">12994</div>
<div class="t" style="top:464.5px;font-size:27px;color:#000;-webkit-text-stroke:0.5px #000;left:216.6px;transform:scaleX(0.9520);">250</div>
<div class="t" style="top:464.5px;font-size:27px;color:#000;-webkit-text-stroke:0.5px #000;left:338.4px;transform:scaleX(0.9297);">クッキー</div>
<div class="t" style="top:498.5px;font-size:27px;color:#000;-webkit-text-stroke:0.5px #000;left:92.2px;transform:scaleX(0.9521);">12995</div>
<div class="t" style="top:498.5px;font-size:27px;color:#000;-webkit-text-stroke:0.5px #000;left:216.6px;transform:scaleX(0.9520);">280</div>
<div class="t" style="top:498.5px;font-size:27px;color:#000;-webkit-text-stroke:0.5px #000;left:312.6px;transform:scaleX(0.9269);">ポップコーン</div>
<div class="t" style="top:532.5px;font-size:27px;color:#000;-webkit-text-stroke:0.5px #000;left:97.2px;transform:scaleX(0.8921);">PG34</div>
<div class="t" style="top:532.5px;font-size:27px;color:#000;-webkit-text-stroke:0.5px #000;left:216.6px;transform:scaleX(0.9520);">350</div>
<div class="t" style="top:532.5px;font-size:27px;color:#000;-webkit-text-stroke:0.5px #000;left:286.8px;transform:scaleX(0.9256);">オレンジジュース</div>
<div class="t" style="top:566.5px;font-size:27px;color:#000;-webkit-text-stroke:0.5px #000;left:97.2px;transform:scaleX(0.9325);">PS92</div>
<div class="t" style="top:566.5px;font-size:27px;color:#000;-webkit-text-stroke:0.5px #000;left:216.6px;transform:scaleX(0.9520);">450</div>
<div class="t" style="top:566.5px;font-size:27px;color:#000;-webkit-text-stroke:0.5px #000;left:286.8px;transform:scaleX(0.9297);">マンゴージュース</div>
<div class="t" style="top:600.5px;font-size:27px;color:#000;-webkit-text-stroke:0.5px #000;left:96.1px;transform:scaleX(0.8678);">RRR2</div>
<div class="t" style="top:600.5px;font-size:27px;color:#000;-webkit-text-stroke:0.5px #000;left:216.6px;transform:scaleX(0.9520);">340</div>
<div class="t" style="top:600.5px;font-size:27px;color:#000;-webkit-text-stroke:0.5px #000;left:299.7px;transform:scaleX(0.9262);">トマトジュース</div>
<div class="t" style="top:634.5px;font-size:27px;color:#000;-webkit-text-stroke:0.5px #000;left:90.1px;transform:scaleX(0.9193);">XD001</div>
<div class="t" style="top:634.5px;font-size:27px;color:#000;-webkit-text-stroke:0.5px #000;left:216.6px;transform:scaleX(0.9520);">230</div>
<div class="t" style="top:634.5px;font-size:27px;color:#000;-webkit-text-stroke:0.5px #000;left:330.1px;transform:scaleX(0.9350);">コーヒーS</div>
<div class="t" style="top:668.5px;font-size:27px;color:#000;-webkit-text-stroke:0.5px #000;left:90.1px;transform:scaleX(0.9193);">XD002</div>
<div class="t" style="top:668.5px;font-size:27px;color:#000;-webkit-text-stroke:0.5px #000;left:216.6px;transform:scaleX(0.9520);">280</div>
<div class="t" style="top:668.5px;font-size:27px;color:#000;-webkit-text-stroke:0.5px #000;left:330.1px;transform:scaleX(0.9034);">コーヒーM</div>
<div class="t" style="top:702.5px;font-size:27px;color:#000;-webkit-text-stroke:0.5px #000;left:90.1px;transform:scaleX(0.9193);">XD003</div>
<div class="t" style="top:702.5px;font-size:27px;color:#000;-webkit-text-stroke:0.5px #000;left:216.6px;transform:scaleX(0.9520);">400</div>
<div class="t" style="top:702.5px;font-size:27px;color:#000;-webkit-text-stroke:0.5px #000;left:330.1px;transform:scaleX(0.9574);">コーヒーL</div>
<div class="t" style="top:736.5px;font-size:27px;color:#000;-webkit-text-stroke:0.5px #000;left:92.2px;transform:scaleX(0.9521);">12994</div>
<div class="t" style="top:736.5px;font-size:27px;color:#000;-webkit-text-stroke:0.5px #000;left:216.6px;transform:scaleX(0.9520);">280</div>
<div class="t" style="top:736.5px;font-size:27px;color:#000;-webkit-text-stroke:0.5px #000;left:338.4px;transform:scaleX(0.9297);">クッキー</div>
<div class="t" style="top:770.5px;font-size:27px;color:#000;-webkit-text-stroke:0.5px #000;left:92.2px;transform:scaleX(0.9521);">12995</div>
<div class="t" style="top:770.5px;font-size:27px;color:#000;-webkit-text-stroke:0.5px #000;left:216.6px;transform:scaleX(0.9520);">280</div>
<div class="t" style="top:770.5px;font-size:27px;color:#000;-webkit-text-stroke:0.5px #000;left:312.6px;transform:scaleX(0.9269);">ポップコーン</div>
<div class="t" style="top:804.5px;font-size:27px;color:#000;-webkit-text-stroke:0.5px #000;left:97.2px;transform:scaleX(0.8921);">PG34</div>
<div class="t" style="top:804.5px;font-size:27px;color:#000;-webkit-text-stroke:0.5px #000;left:216.6px;transform:scaleX(0.9520);">400</div>
<div class="t" style="top:804.5px;font-size:27px;color:#000;-webkit-text-stroke:0.5px #000;left:286.8px;transform:scaleX(0.9256);">オレンジジュース</div>
<div class="t" style="top:838.5px;font-size:27px;color:#000;-webkit-text-stroke:0.5px #000;left:96.1px;transform:scaleX(0.8678);">RRR3</div>
<div class="t" style="top:838.5px;font-size:27px;color:#000;-webkit-text-stroke:0.5px #000;left:216.6px;transform:scaleX(0.9520);">300</div>
<div class="t" style="top:838.5px;font-size:27px;color:#000;-webkit-text-stroke:0.5px #000;left:299.7px;transform:scaleX(0.9262);">トマトジュース</div>
<div class="t" style="top:872.5px;font-size:27px;color:#000;-webkit-text-stroke:0.5px #000;left:90.1px;transform:scaleX(0.9193);">XD001</div>
<div class="t" style="top:872.5px;font-size:27px;color:#000;-webkit-text-stroke:0.5px #000;left:216.6px;transform:scaleX(0.9520);">230</div>
<div class="t" style="top:872.5px;font-size:27px;color:#000;-webkit-text-stroke:0.5px #000;left:330.1px;transform:scaleX(0.9350);">コーヒーS</div>
<div class="t" style="top:906.5px;font-size:27px;color:#000;-webkit-text-stroke:0.5px #000;left:90.1px;transform:scaleX(0.9193);">XD002</div>
<div class="t" style="top:906.5px;font-size:27px;color:#000;-webkit-text-stroke:0.5px #000;left:216.6px;transform:scaleX(0.9520);">280</div>
<div class="t" style="top:906.5px;font-size:27px;color:#000;-webkit-text-stroke:0.5px #000;left:330.1px;transform:scaleX(0.9034);">コーヒーM</div>
<div class="t" style="top:940.5px;font-size:27px;color:#000;-webkit-text-stroke:0.5px #000;left:90.1px;transform:scaleX(0.9193);">XD003</div>
<div class="t" style="top:940.5px;font-size:27px;color:#000;-webkit-text-stroke:0.5px #000;left:216.6px;transform:scaleX(0.9520);">400</div>
<div class="t" style="top:940.5px;font-size:27px;color:#000;-webkit-text-stroke:0.5px #000;left:330.1px;transform:scaleX(0.9574);">コーヒーL</div>
<div class="t" style="top:974.5px;font-size:27px;color:#000;-webkit-text-stroke:0.5px #000;left:99.4px;transform:scaleX(0.9521);">3422</div>
<div class="t" style="top:974.5px;font-size:27px;color:#000;-webkit-text-stroke:0.5px #000;left:216.6px;transform:scaleX(0.9520);">320</div>
<div class="t" style="top:974.5px;font-size:27px;color:#000;-webkit-text-stroke:0.5px #000;left:312.6px;transform:scaleX(0.9214);">ホットドッグ</div>
<div class="t" style="top:1008.5px;font-size:27px;color:#000;-webkit-text-stroke:0.5px #000;left:92.2px;transform:scaleX(0.9521);">45223</div>
<div class="t" style="top:1008.5px;font-size:27px;color:#000;-webkit-text-stroke:0.5px #000;left:216.6px;transform:scaleX(0.9520);">640</div>
<div class="t" style="top:1008.5px;font-size:27px;color:#000;-webkit-text-stroke:0.5px #000;left:299.7px;transform:scaleX(0.9358);">ハンバーグ定食</div>
<div class="b" style="left:777px;top:492px;width:408px;height:1px;background:#a9a9a9;"></div>
<div class="b" style="left:777px;top:526px;width:408px;height:1px;background:#a9a9a9;"></div>
<div class="b" style="left:777px;top:560px;width:408px;height:1px;background:#a9a9a9;"></div>
<div class="b" style="left:777px;top:594px;width:408px;height:1px;background:#a9a9a9;"></div>
<div class="b" style="left:777px;top:628px;width:408px;height:1px;background:#a9a9a9;"></div>
<div class="b" style="left:777px;top:662px;width:408px;height:1px;background:#a9a9a9;"></div>
<div class="b" style="left:777px;top:696px;width:408px;height:1px;background:#a9a9a9;"></div>
<div class="b" style="left:777px;top:730px;width:408px;height:1px;background:#a9a9a9;"></div>
<div class="b" style="left:777px;top:764px;width:408px;height:1px;background:#a9a9a9;"></div>
<div class="b" style="left:777px;top:798px;width:408px;height:1px;background:#a9a9a9;"></div>
<div class="b" style="left:777px;top:832px;width:408px;height:1px;background:#a9a9a9;"></div>
<div class="b" style="left:777px;top:866px;width:408px;height:1px;background:#a9a9a9;"></div>
<div class="b" style="left:777px;top:900px;width:408px;height:1px;background:#a9a9a9;"></div>
<div class="b" style="left:777px;top:934px;width:408px;height:1px;background:#a9a9a9;"></div>
<div class="b" style="left:777px;top:968px;width:408px;height:1px;background:#a9a9a9;"></div>
<div class="b" style="left:777px;top:1002px;width:408px;height:1px;background:#a9a9a9;"></div>
<div class="b" style="left:777px;top:1036px;width:408px;height:1px;background:#a9a9a9;"></div>
<div class="b" style="left:777px;top:1070px;width:408px;height:1px;background:#a9a9a9;"></div>
<div class="b" style="left:777px;top:1104px;width:408px;height:1px;background:#a9a9a9;"></div>
<div class="b" style="left:777px;top:1138px;width:408px;height:1px;background:#a9a9a9;"></div>
<div class="b" style="left:777px;top:1172px;width:408px;height:1px;background:#a9a9a9;"></div>
<div class="b" style="left:777px;top:1206px;width:408px;height:1px;background:#a9a9a9;"></div>
<div class="b" style="left:777px;top:1240px;width:408px;height:1px;background:#a9a9a9;"></div>
<div class="b" style="left:777px;top:1274px;width:408px;height:1px;background:#a9a9a9;"></div>
<div class="b" style="left:955px;top:459px;width:1px;height:33px;background:#a9a9a9;"></div>
<div class="b" style="left:955px;top:493px;width:1px;height:33px;background:#a9a9a9;"></div>
<div class="b" style="left:955px;top:561px;width:1px;height:33px;background:#a9a9a9;"></div>
<div class="b" style="left:955px;top:629px;width:1px;height:33px;background:#a9a9a9;"></div>
<div class="b" style="left:955px;top:697px;width:1px;height:33px;background:#a9a9a9;"></div>
<div class="b" style="left:776px;top:458px;width:409px;height:2px;background:#1f1fd0;"></div>
<div class="b" style="left:775px;top:458px;width:2px;height:802px;background:#1f1fd0;"></div>
<div class="b" style="left:1184px;top:425px;width:2px;height:835px;background:#1f1fd0;"></div>
<div class="b" style="left:1185px;top:491px;width:383px;height:2px;background:#1f1fd0;"></div>
<div class="b" style="left:921px;top:459px;width:34px;height:33px;background:#fff;box-shadow:inset 0 0 0 1px #b8b8b8;"></div>
<svg class="b" style="left:931px;top:473px;" width="14" height="8" viewBox="0 0 14 8"><path d="M0 0 H13 L6.5 7 Z" fill="#777"/></svg>
<div class="b" style="left:1151px;top:459px;width:34px;height:33px;background:#fff;box-shadow:inset 0 0 0 1px #b8b8b8;"></div>
<svg class="b" style="left:1161px;top:473px;" width="14" height="8" viewBox="0 0 14 8"><path d="M0 0 H13 L6.5 7 Z" fill="#777"/></svg>
<div class="t" style="top:464.5px;font-size:27px;color:#000;-webkit-text-stroke:0.5px #000;left:783.0px;transform:scaleX(0.9124);">商品コード</div>
<div class="t" style="top:464.5px;font-size:27px;color:#000;-webkit-text-stroke:0.5px #000;left:962.0px;transform:scaleX(0.9630);">商品名</div>
<svg class="b" style="left:870.8px;top:503px;" width="18" height="17" viewBox="0 0 18 17"><defs><linearGradient id="mg" x1="0" y1="0" x2="0" y2="1"><stop offset="0" stop-color="#fbfbfb"/><stop offset="1" stop-color="#d6d9e0"/></linearGradient></defs><rect x="0.5" y="0.5" width="17" height="16" rx="2" fill="url(#mg)" stroke="#9aa3b5"/><path d="M4 8.5 H14" stroke="#4a5a80" stroke-width="1.4"/></svg>
<div class="t" style="top:498.5px;font-size:27px;color:#000;-webkit-text-stroke:0.5px #000;left:891.8px;transform:scaleX(0.9521);">3422</div>
<div class="t" style="top:498.5px;font-size:27px;color:#000;-webkit-text-stroke:0.5px #000;left:962.0px;transform:scaleX(0.9214);">ホットドッグ</div>
<div class="t" style="top:532.5px;font-size:27px;color:#000;-webkit-text-stroke:0.5px #000;left:782.0px;transform:scaleX(1.0101);">3422 集計</div>
<svg class="b" style="left:856.5px;top:571px;" width="18" height="17" viewBox="0 0 18 17"><defs><linearGradient id="mg" x1="0" y1="0" x2="0" y2="1"><stop offset="0" stop-color="#fbfbfb"/><stop offset="1" stop-color="#d6d9e0"/></linearGradient></defs><rect x="0.5" y="0.5" width="17" height="16" rx="2" fill="url(#mg)" stroke="#9aa3b5"/><path d="M4 8.5 H14" stroke="#4a5a80" stroke-width="1.4"/></svg>
<div class="t" style="top:566.5px;font-size:27px;color:#000;-webkit-text-stroke:0.5px #000;left:877.5px;transform:scaleX(0.9521);">12994</div>
<div class="t" style="top:566.5px;font-size:27px;color:#000;-webkit-text-stroke:0.5px #000;left:962.0px;transform:scaleX(0.9297);">クッキー</div>
<div class="t" style="top:600.5px;font-size:27px;color:#000;-webkit-text-stroke:0.5px #000;left:782.0px;">12994 集計</div>
<svg class="b" style="left:856.5px;top:639px;" width="18" height="17" viewBox="0 0 18 17"><defs><linearGradient id="mg" x1="0" y1="0" x2="0" y2="1"><stop offset="0" stop-color="#fbfbfb"/><stop offset="1" stop-color="#d6d9e0"/></linearGradient></defs><rect x="0.5" y="0.5" width="17" height="16" rx="2" fill="url(#mg)" stroke="#9aa3b5"/><path d="M4 8.5 H14" stroke="#4a5a80" stroke-width="1.4"/></svg>
<div class="t" style="top:634.5px;font-size:27px;color:#000;-webkit-text-stroke:0.5px #000;left:877.5px;transform:scaleX(0.9521);">12995</div>
<div class="t" style="top:634.5px;font-size:27px;color:#000;-webkit-text-stroke:0.5px #000;left:962.0px;transform:scaleX(0.9269);">ポップコーン</div>
<div class="t" style="top:668.5px;font-size:27px;color:#000;-webkit-text-stroke:0.5px #000;left:782.0px;">12995 集計</div>
<svg class="b" style="left:856.5px;top:707px;" width="18" height="17" viewBox="0 0 18 17"><defs><linearGradient id="mg" x1="0" y1="0" x2="0" y2="1"><stop offset="0" stop-color="#fbfbfb"/><stop offset="1" stop-color="#d6d9e0"/></linearGradient></defs><rect x="0.5" y="0.5" width="17" height="16" rx="2" fill="url(#mg)" stroke="#9aa3b5"/><path d="M4 8.5 H14" stroke="#4a5a80" stroke-width="1.4"/></svg>
<div class="t" style="top:702.5px;font-size:27px;color:#000;-webkit-text-stroke:0.5px #000;left:877.5px;transform:scaleX(0.9521);">45223</div>
<div class="t" style="top:702.5px;font-size:27px;color:#000;-webkit-text-stroke:0.5px #000;left:962.0px;transform:scaleX(0.9358);">ハンバーグ定食</div>
<div class="t" style="top:736.5px;font-size:27px;color:#000;-webkit-text-stroke:0.5px #000;left:782.0px;">45223 集計</div>
<svg class="b" style="left:784px;top:775px;" width="18" height="17" viewBox="0 0 18 17"><defs><linearGradient id="mg" x1="0" y1="0" x2="0" y2="1"><stop offset="0" stop-color="#fbfbfb"/><stop offset="1" stop-color="#d6d9e0"/></linearGradient></defs><rect x="0.5" y="0.5" width="17" height="16" rx="2" fill="url(#mg)" stroke="#9aa3b5"/><path d="M4 8.5 H14" stroke="#4a5a80" stroke-width="1.4"/></svg>
<div class="t" style="top:770.5px;font-size:27px;color:#000;-webkit-text-stroke:0.5px #000;left:806.0px;transform:scaleX(0.8921);">PG34</div>
<div class="t" style="top:804.5px;font-size:27px;color:#000;-webkit-text-stroke:0.5px #000;left:782.0px;transform:scaleX(0.9744);">PG34 集計</div>
<svg class="b" style="left:784px;top:843px;" width="18" height="17" viewBox="0 0 18 17"><defs><linearGradient id="mg" x1="0" y1="0" x2="0" y2="1"><stop offset="0" stop-color="#fbfbfb"/><stop offset="1" stop-color="#d6d9e0"/></linearGradient></defs><rect x="0.5" y="0.5" width="17" height="16" rx="2" fill="url(#mg)" stroke="#9aa3b5"/><path d="M4 8.5 H14" stroke="#4a5a80" stroke-width="1.4"/></svg>
<div class="t" style="top:838.5px;font-size:27px;color:#000;-webkit-text-stroke:0.5px #000;left:806.0px;transform:scaleX(0.9325);">PS92</div>
<div class="t" style="top:872.5px;font-size:27px;color:#000;-webkit-text-stroke:0.5px #000;left:782.0px;">PS92 集計</div>
<svg class="b" style="left:784px;top:911px;" width="18" height="17" viewBox="0 0 18 17"><defs><linearGradient id="mg" x1="0" y1="0" x2="0" y2="1"><stop offset="0" stop-color="#fbfbfb"/><stop offset="1" stop-color="#d6d9e0"/></linearGradient></defs><rect x="0.5" y="0.5" width="17" height="16" rx="2" fill="url(#mg)" stroke="#9aa3b5"/><path d="M4 8.5 H14" stroke="#4a5a80" stroke-width="1.4"/></svg>
<div class="t" style="top:906.5px;font-size:27px;color:#000;-webkit-text-stroke:0.5px #000;left:806.0px;transform:scaleX(0.8678);">RRR2</div>
<div class="t" style="top:940.5px;font-size:27px;color:#000;-webkit-text-stroke:0.5px #000;left:782.0px;transform:scaleX(0.9584);">RRR2 集計</div>
<svg class="b" style="left:784px;top:979px;" width="18" height="17" viewBox="0 0 18 17"><defs><linearGradient id="mg" x1="0" y1="0" x2="0" y2="1"><stop offset="0" stop-color="#fbfbfb"/><stop offset="1" stop-color="#d6d9e0"/></linearGradient></defs><rect x="0.5" y="0.5" width="17" height="16" rx="2" fill="url(#mg)" stroke="#9aa3b5"/><path d="M4 8.5 H14" stroke="#4a5a80" stroke-width="1.4"/></svg>
<div class="t" style="top:974.5px;font-size:27px;color:#000;-webkit-text-stroke:0.5px #000;left:806.0px;transform:scaleX(0.8678);">RRR3</div>
<div class="t" style="top:1008.5px;font-size:27px;color:#000;-webkit-text-stroke:0.5px #000;left:782.0px;transform:scaleX(0.9584);">RRR3 集計</div>
<svg class="b" style="left:784px;top:1047px;" width="18" height="17" viewBox="0 0 18 17"><defs><linearGradient id="mg" x1="0" y1="0" x2="0" y2="1"><stop offset="0" stop-color="#fbfbfb"/><stop offset="1" stop-color="#d6d9e0"/></linearGradient></defs><rect x="0.5" y="0.5" width="17" height="16" rx="2" fill="url(#mg)" stroke="#9aa3b5"/><path d="M4 8.5 H14" stroke="#4a5a80" stroke-width="1.4"/></svg>
<div class="t" style="top:1042.5px;font-size:27px;color:#000;-webkit-text-stroke:0.5px #000;left:806.0px;transform:scaleX(0.9193);">XD001</div>
<div class="t" style="top:1076.5px;font-size:27px;color:#000;-webkit-text-stroke:0.5px #000;left:782.0px;transform:scaleX(0.9822);">XD001 集計</div>
<svg class="b" style="left:784px;top:1115px;" width="18" height="17" viewBox="0 0 18 17"><defs><linearGradient id="mg" x1="0" y1="0" x2="0" y2="1"><stop offset="0" stop-color="#fbfbfb"/><stop offset="1" stop-color="#d6d9e0"/></linearGradient></defs><rect x="0.5" y="0.5" width="17" height="16" rx="2" fill="url(#mg)" stroke="#9aa3b5"/><path d="M4 8.5 H14" stroke="#4a5a80" stroke-width="1.4"/></svg>
<div class="t" style="top:1110.5px;font-size:27px;color:#000;-webkit-text-stroke:0.5px #000;left:806.0px;transform:scaleX(0.9193);">XD002</div>
<div class="t" style="top:1144.5px;font-size:27px;color:#000;-webkit-text-stroke:0.5px #000;left:782.0px;transform:scaleX(0.9822);">XD002 集計</div>
<svg class="b" style="left:784px;top:1183px;" width="18" height="17" viewBox="0 0 18 17"><defs><linearGradient id="mg" x1="0" y1="0" x2="0" y2="1"><stop offset="0" stop-color="#fbfbfb"/><stop offset="1" stop-color="#d6d9e0"/></linearGradient></defs><rect x="0.5" y="0.5" width="17" height="16" rx="2" fill="url(#mg)" stroke="#9aa3b5"/><path d="M4 8.5 H14" stroke="#4a5a80" stroke-width="1.4"/></svg>
<div class="t" style="top:1178.5px;font-size:27px;color:#000;-webkit-text-stroke:0.5px #000;left:806.0px;transform:scaleX(0.9193);">XD003</div>
<div class="t" style="top:1212.5px;font-size:27px;color:#000;-webkit-text-stroke:0.5px #000;left:782.0px;transform:scaleX(0.9822);">XD003 集計</div>
<div class="t" style="top:1246.5px;font-size:27px;color:#000;-webkit-text-stroke:0.5px #000;left:782.0px;transform:scaleX(0.9556);">総計</div>
<div class="b" style="left:774px;top:694px;width:184px;height:39px;border:3px solid #217346;"></div>
<div class="t" style="top:436.5px;font-size:39px;color:#a0a0a0;letter-spacing:3px;left:1227.0px;">ここに列のフィールドをドラッグ</div>
<div class="t" style="top:691.5px;font-size:39px;color:#a0a0a0;letter-spacing:3px;left:1227.0px;">ここに値フィールドをドラッグ</div>
<div class="b" style="left:1568px;top:391px;width:38px;height:910px;background:#e6e6e6;"></div>
<div class="b" style="left:1567px;top:425px;width:1px;height:836px;background:#ababab;"></div>
<div class="b" style="left:1570px;top:392px;width:33px;height:33px;background:#fff;box-shadow:inset 0 0 0 1px #ababab;"></div>
<svg class="b" style="left:1578px;top:403px;" width="17" height="10" viewBox="0 0 17 10"><path d="M0 9 H16 L8 0 Z" fill="#777"/></svg>
<div class="b" style="left:1570px;top:425px;width:33px;height:771px;background:#fff;box-shadow:inset 0 0 0 1px #ababab;"></div>
<div class="b" style="left:1571px;top:1196px;width:31px;height:33px;background:#dadada;"></div>
<div class="b" style="left:1570px;top:1229px;width:33px;height:33px;background:#fff;box-shadow:inset 0 0 0 1px #ababab;"></div>
<svg class="b" style="left:1578px;top:1241px;" width="17" height="10" viewBox="0 0 17 10"><path d="M0 0 H16 L8 9 Z" fill="#777"/></svg>
<div class="b" style="left:1606px;top:391px;width:602px;height:910px;background:#e6e6e6;"></div>
<div class="b" style="left:1606px;top:391px;width:1px;height:908px;background:#c6c6c6;"></div>
<div class="t" style="top:408.0px;font-size:44px;color:#217346;-webkit-text-stroke:0.25px #217346;left:1623.0px;transform:scaleX(0.7094);">ピボットテーブルのフィー. . .</div>
<svg class="b" style="left:2078px;top:426px;" width="15" height="9" viewBox="0 0 15 9"><path d="M0 0 H14 L7 8 Z" fill="#666"/></svg>
<svg class="b" style="left:2159px;top:422px;" width="17" height="17" viewBox="0 0 17 17"><path d="M2.5 2.5 L14.5 14.5 M14.5 2.5 L2.5 14.5" stroke="#707070" stroke-width="3" stroke-linecap="round"/></svg>
<div class="t" style="top:479.0px;font-size:24px;color:#444;-webkit-text-stroke:0.25px #444;left:1627.0px;transform:scaleX(0.7730);">レポートに追加するフィールドを選択してください:</div>
<div class="b" style="left:2121px;top:469px;width:72px;height:43px;background:#fcfcfc;box-shadow:inset 0 0 0 1px #c6c6c6;"></div>
<svg class="b" style="left:2131px;top:476px;" width="30" height="30" viewBox="0 0 30 30"><g transform="translate(15,15)" fill="#959595"><circle r="10"/><rect x="-3.2" y="-14" width="6.4" height="7" rx="1" transform="rotate(0)"/><rect x="-3.2" y="-14" width="6.4" height="7" rx="1" transform="rotate(45)"/><rect x="-3.2" y="-14" width="6.4" height="7" rx="1" transform="rotate(90)"/><rect x="-3.2" y="-14" width="6.4" height="7" rx="1" transform="rotate(135)"/><rect x="-3.2" y="-14" width="6.4" height="7" rx="1" transform="rotate(180)"/><rect x="-3.2" y="-14" width="6.4" height="7" rx="1" transform="rotate(225)"/><rect x="-3.2" y="-14" width="6.4" height="7" rx="1" transform="rotate(270)"/><rect x="-3.2" y="-14" width="6.4" height="7" rx="1" transform="rotate(315)"/><circle r="4.5" fill="#fcfcfc"/></g></svg>
<svg class="b" style="left:2171px;top:486px;" width="15" height="9" viewBox="0 0 15 9"><path d="M0 0 H14 L7 8 Z" fill="#707070"/></svg>
<div class="b" style="left:1627px;top:530px;width:566px;height:36px;background:#fff;box-shadow:inset 0 0 0 1px #c6c6c6;"></div>
<div class="t" style="top:536.0px;font-size:24px;color:#777;-webkit-text-stroke:0.25px #777;left:1630.0px;transform:scaleX(0.9583);">検索</div>
<svg class="b" style="left:2160px;top:533px;" width="30" height="30" viewBox="0 0 30 30"><circle cx="18" cy="11" r="8" fill="none" stroke="#3d7fc1" stroke-width="2.8"/><path d="M12 17 L3 26" stroke="#3d7fc1" stroke-width="4" stroke-linecap="round"/></svg>
<div class="b" style="left:1627px;top:592px;width:566px;height:267px;background:#fcfcfc;"></div>
<svg class="b" style="left:1629px;top:594px;" width="26" height="26" viewBox="0 0 26 26"><rect x="0.5" y="0.5" width="25" height="25" fill="#fff" stroke="#555"/><path d="M5 13 L10 19 L21 6" fill="none" stroke="#555" stroke-width="2.4"/></svg>
<svg class="b" style="left:1629px;top:632px;" width="26" height="26" viewBox="0 0 26 26"><rect x="0.5" y="0.5" width="25" height="25" fill="#fff" stroke="#555"/></svg>
<svg class="b" style="left:1629px;top:670px;" width="26" height="26" viewBox="0 0 26 26"><rect x="0.5" y="0.5" width="25" height="25" fill="#fff" stroke="#555"/><path d="M5 13 L10 19 L21 6" fill="none" stroke="#555" stroke-width="2.4"/></svg>
<div class="t" style="top:596.0px;font-size:24px;color:#333;font-weight:bold;-webkit-text-stroke:0.25px #333;left:1662.0px;transform:scaleX(0.8525);">商品コード</div>
<div class="t" style="top:634.0px;font-size:24px;color:#333;-webkit-text-stroke:0.25px #333;left:1662.0px;transform:scaleX(0.9583);">単価</div>
<div class="t" style="top:673.0px;font-size:24px;color:#333;font-weight:bold;-webkit-text-stroke:0.25px #333;left:1662.0px;transform:scaleX(0.9722);">商品名</div>
<div class="b" style="left:1629px;top:875px;width:568px;height:0;border-top:1px dotted #b4b4b4"></div>
<div class="t" style="top:884.0px;font-size:24px;color:#444;-webkit-text-stroke:0.25px #444;left:1631.0px;transform:scaleX(0.7289);">次のボックス間でフィールドをドラッグしてください:</div>
<div class="b" style="left:1911px;top:932px;width:2px;height:285px;background:#c6c6c6;"></div>
<div class="b" style="left:1630px;top:1074px;width:564px;height:2px;background:#c6c6c6;"></div>
<svg class="b" style="left:1636px;top:938px;" width="24" height="24" viewBox="0 0 24 24"><path d="M1 1 H23 L14 11 V23 H10 V11 Z" fill="#777"/></svg>
<div class="t" style="top:937.0px;font-size:24px;color:#444;-webkit-text-stroke:0.25px #444;left:1669.0px;transform:scaleX(0.6935);">フィルター</div>
<svg class="b" style="left:1922px;top:939px;" width="20" height="22" viewBox="0 0 20 22"><rect x="1" y="1" width="5" height="20" fill="#999"/><path d="M9 1 V21 M12 1 V21 M15 1 V21 M18 1 V21" stroke="#999"/></svg>
<div class="t" style="top:937.0px;font-size:24px;color:#444;-webkit-text-stroke:0.25px #444;left:1953.0px;">列</div>
<div class="b" style="left:1630px;top:972px;width:275px;height:95px;background:#fcfcfc;"></div>
<div class="b" style="left:1914px;top:972px;width:280px;height:95px;background:#fcfcfc;"></div>
<svg class="b" style="left:1636px;top:1086px;" width="24" height="22" viewBox="0 0 24 22"><rect x="1" y="1" width="22" height="5" fill="#999"/><path d="M1 9 H23 M1 12 H23 M1 15 H23 M1 18 H23" stroke="#999"/></svg>
<div class="t" style="top:1086.0px;font-size:24px;color:#444;-webkit-text-stroke:0.25px #444;left:1669.0px;">行</div>
<div class="t" style="top:1083.0px;font-size:30px;color:#777;-webkit-text-stroke:0.25px #777;left:1921.0px;transform:scaleX(1.0783);">Σ</div>
<div class="t" style="top:1086.0px;font-size:24px;color:#444;-webkit-text-stroke:0.25px #444;left:1953.0px;">値</div>
<div class="b" style="left:1914px;top:1121px;width:280px;height:96px;background:#fcfcfc;"></div>
<div class="b" style="left:1631px;top:1123px;width:239px;height:46px;background:#fcfcfc;box-shadow:inset 0 0 0 1px #c6c6c6;"></div>
<div class="b" style="left:1631px;top:1171px;width:239px;height:46px;background:#fcfcfc;box-shadow:inset 0 0 0 1px #c6c6c6;"></div>
<div class="t" style="top:1135.0px;font-size:24px;color:#333;-webkit-text-stroke:0.25px #333;left:1649.0px;transform:scaleX(0.8443);">商品コード</div>
<div class="t" style="top:1183.0px;font-size:24px;color:#333;-webkit-text-stroke:0.25px #333;left:1649.0px;transform:scaleX(0.9861);">商品名</div>
<svg class="b" style="left:1831px;top:1142px;" width="15" height="9" viewBox="0 0 15 9"><path d="M0 0 H14 L7 8 Z" fill="#555"/></svg>
<svg class="b" style="left:1831px;top:1190px;" width="15" height="9" viewBox="0 0 15 9"><path d="M0 0 H14 L7 8 Z" fill="#555"/></svg>
<div class="b" style="left:1871px;top:1123px;width:33px;height:33px;background:#fcfcfc;box-shadow:inset 0 0 0 1px #c6c6c6;"></div>
<div class="b" style="left:1871px;top:1155px;width:33px;height:29px;background:#fcfcfc;box-shadow:inset 0 0 0 1px #c6c6c6;"></div>
<div class="b" style="left:1871px;top:1183px;width:33px;height:34px;background:#fcfcfc;box-shadow:inset 0 0 0 1px #c6c6c6;"></div>
<svg class="b" style="left:1879px;top:1134px;" width="17" height="10" viewBox="0 0 17 10"><path d="M0 9 H16 L8 0 Z" fill="#666"/></svg>
<svg class="b" style="left:1880px;top:1196px;" width="15" height="9" viewBox="0 0 15 9"><path d="M0 0 H14 L7 8 Z" fill="#666"/></svg>
<svg class="b" style="left:1630px;top:1253px;" width="26" height="26" viewBox="0 0 26 26"><rect x="0.5" y="0.5" width="25" height="25" fill="#fff" stroke="#555"/></svg>
<div class="t" style="top:1254.0px;font-size:24px;color:#444;-webkit-text-stroke:0.25px #444;left:1669.0px;transform:scaleX(0.8006);">レイアウトの更新を保留する</div>
<div class="b" style="left:2125px;top:1241px;width:69px;height:49px;background:#fcfcfc;"></div>
<div class="t" style="top:1254.0px;font-size:24px;color:#a6a6a6;-webkit-text-stroke:0.25px #a6a6a6;left:2135.5px;transform:scaleX(0.9792);">更新</div>
<div class="b" style="left:1px;top:1260px;width:1567px;height:41px;background:#e6e6e6;"></div>
<div class="b" style="left:1px;top:1260px;width:1567px;height:1px;background:#c6c6c6;"></div>
<svg class="b" style="left:31px;top:1273px;" width="12" height="17" viewBox="0 0 12 17"><path d="M11 0 V16 L1 8 Z" fill="#b8b8b8"/></svg>
<svg class="b" style="left:73px;top:1273px;" width="12" height="17" viewBox="0 0 12 17"><path d="M1 0 V16 L11 8 Z" fill="#b8b8b8"/></svg>
<div class="b" style="left:140px;top:1265px;width:1px;height:32px;background:#b0b0b0;"></div>
<div class="b" style="left:272px;top:1265px;width:1px;height:32px;background:#b0b0b0;"></div>
<div class="b" style="left:395px;top:1260px;width:123px;height:39px;background:#fff;"></div>
<div class="b" style="left:395px;top:1260px;width:1px;height:38px;background:#c6c6c6;"></div>
<div class="b" style="left:517px;top:1260px;width:1px;height:38px;background:#c6c6c6;"></div>
<div class="b" style="left:395px;top:1296px;width:123px;height:2px;background:#217346;"></div>
<div class="t" style="top:1264.0px;font-size:28px;color:#444;-webkit-text-stroke:0.25px #444;left:152.0px;transform:scaleX(0.9643);">集計処理</div>
<div class="t" style="top:1264.0px;font-size:28px;color:#444;-webkit-text-stroke:0.25px #444;left:287.0px;transform:scaleX(1.0141);">Sheet1</div>
<div class="t" style="top:1264.0px;font-size:28px;color:#217346;-webkit-text-stroke:0.25px #217346;left:411.0px;transform:scaleX(1.0254);">Sheet2</div>
<svg class="b" style="left:563px;top:1266px;" width="34" height="34" viewBox="0 0 34 34"><circle cx="17" cy="17" r="15" fill="none" stroke="#888" stroke-width="2.4"/><path d="M17 9 V25 M9 17 H25" stroke="#777" stroke-width="3"/></svg>
<div class="b" style="left:1100px;top:1264px;width:316px;height:33px;background:#fff;box-shadow:inset 0 0 0 1px #ababab;"></div>
<div class="b" style="left:1416px;top:1264px;width:120px;height:33px;background:#dadada;"></div>
<div class="b" style="left:1536px;top:1264px;width:33px;height:33px;background:#fff;box-shadow:inset 0 0 0 1px #ababab;"></div>
<svg class="b" style="left:1547px;top:1272px;" width="10" height="17" viewBox="0 0 10 17"><path d="M0 0 V16 L9 8 Z" fill="#777"/></svg>
<div class="b" style="left:0px;top:1301px;width:2208px;height:45px;background:#f0f0f0;"></div>
<div class="b" style="left:0px;top:1301px;width:2208px;height:1px;background:#d0d0d0;"></div>
<div class="t" style="top:1311.0px;font-size:24px;color:#444;-webkit-text-stroke:0.25px #444;left:9.0px;transform:scaleX(0.9792);">準備完了</div>
<div class="b" style="left:1678px;top:1302px;width:53px;height:44px;background:#c6c6c6;"></div>
<svg class="b" style="left:1690px;top:1309px;" width="28" height="28" viewBox="0 0 28 28"><rect x="1" y="1" width="26" height="26" fill="none" stroke="#666" stroke-width="1.4"/><path d="M1 9.7 H27 M1 18.3 H27 M9.7 1 V27 M18.3 1 V27" stroke="#666" stroke-width="1.4"/></svg>
<svg class="b" style="left:1742px;top:1309px;" width="28" height="28" viewBox="0 0 28 28"><rect x="1" y="1" width="26" height="26" fill="none" stroke="#666" stroke-width="1.4"/><rect x="5" y="4" width="18" height="20" fill="none" stroke="#666" stroke-width="1.2"/><path d="M8 9 H20 M8 13 H20 M8 17 H20 M8 21 H20" stroke="#666" stroke-width="1.2"/></svg>
<svg class="b" style="left:1794px;top:1309px;" width="28" height="28" viewBox="0 0 28 28"><rect x="1" y="1" width="26" height="26" fill="none" stroke="#666" stroke-width="1.4"/><path d="M1 15 H16 V1 M8.5 1 V15" fill="none" stroke="#666" stroke-width="1.4"/></svg>
<div class="b" style="left:1843px;top:1322px;width:14px;height:3px;background:#555;"></div>
<div class="b" style="left:1864px;top:1322px;width:199px;height:2px;background:#999;"></div>
<div class="b" style="left:1960px;top:1311px;width:8px;height:25px;background:#555;"></div>
<div class="b" style="left:2071px;top:1322px;width:17px;height:3px;background:#555;"></div>
<div class="b" style="left:2078px;top:1314px;width:3px;height:17px;background:#555;"></div>
<div class="t" style="top:1309.0px;font-size:28px;color:#444;-webkit-text-stroke:0.25px #444;left:2109.0px;transform:scaleX(0.9354);">100%</div>
<div class="b" style="left:0px;top:125px;width:1px;height:1221px;background:#217346;"></div>
<div class="b" style="left:2207px;top:125px;width:1px;height:1221px;background:#217346;"></div>
<div class="b" style="left:0px;top:1345px;width:2208px;height:1px;background:#217346;"></div>
<div class="b" style="left:927px;top:584px;width:530px;height:102px;background:#fcfcfc;border:1px solid #c6c6c6;box-shadow:2px 2px 4px rgba(0,0,0,0.15)"></div>
<div class="b" style="left:934px;top:591px;width:130px;height:48px;background:#fcfcfc;box-shadow:inset 0 0 0 1px #c6c6c6;"></div>
<div class="b" style="left:1063px;top:591px;width:99px;height:48px;background:#fcfcfc;box-shadow:inset 0 0 0 1px #c6c6c6;"></div>
<div class="t" style="top:599.0px;font-size:24px;color:#555;-webkit-text-stroke:0.25px #555;left:940.0px;transform:scaleX(0.9164);">ＭＳ Ｐゴ</div>
<svg class="b" style="left:1044px;top:612px;" width="11" height="7" viewBox="0 0 11 7"><path d="M0 0 H10 L5 6 Z" fill="#666"/></svg>
<div class="t" style="top:598.0px;font-size:26px;color:#444;-webkit-text-stroke:0.25px #444;left:1069.0px;transform:scaleX(1.0370);">11</div>
<svg class="b" style="left:1143px;top:612px;" width="11" height="7" viewBox="0 0 11 7"><path d="M0 0 H10 L5 6 Z" fill="#666"/></svg>
<div class="t" style="top:603.0px;font-size:26px;color:#555;-webkit-text-stroke:0.25px #555;left:1176.0px;transform:scaleX(1.0378);">A</div>
<svg class="b" style="left:1188px;top:603px;" width="9" height="6" viewBox="0 0 9 6"><path d="M0 5 H8 L4 0 Z" fill="#3d7fc1"/></svg>
<div class="t" style="top:609.0px;font-size:20px;color:#555;-webkit-text-stroke:0.25px #555;left:1221.0px;transform:scaleX(1.0492);">A</div>
<svg class="b" style="left:1229px;top:602px;" width="9" height="6" viewBox="0 0 9 6"><path d="M0 0 H8 L4 5 Z" fill="#3d7fc1"/></svg>
<svg class="b" style="left:1257px;top:600px;" width="32" height="32" viewBox="0 0 32 32"><rect x="2" y="2" width="26" height="14" fill="none" stroke="#3d7fc1" stroke-width="2.6"/><path d="M1 1 H6 L1 6 Z M29 1 H24 L29 6 Z M1 17 V12 L6 17 Z" fill="#3d7fc1"/><circle cx="14" cy="9" r="3.6" fill="#3d7fc1"/><g fill="#efc77f" stroke="#fff" stroke-width="0.8"><ellipse cx="22" cy="16" rx="7" ry="3"/><ellipse cx="22" cy="20" rx="7" ry="3"/><ellipse cx="22" cy="24" rx="7" ry="3"/><ellipse cx="11" cy="23" rx="7" ry="3"/><ellipse cx="11" cy="27" rx="7" ry="3"/></g></svg>
<svg class="b" style="left:1300px;top:612px;" width="11" height="7" viewBox="0 0 11 7"><path d="M0 0 H10 L5 6 Z" fill="#666"/></svg>
<div class="t" style="top:601.0px;font-size:30px;color:#555;-webkit-text-stroke:0.25px #555;left:1327.0px;transform:scaleX(0.9742);">%</div>
<svg class="b" style="left:1376px;top:602px;" width="16" height="24" viewBox="0 0 16 24"><circle cx="8" cy="7" r="5.5" fill="#555"/><path d="M12 8 Q13 17 4 22" fill="none" stroke="#555" stroke-width="3"/></svg>
<svg class="b" style="left:1413px;top:601px;" width="30" height="30" viewBox="0 0 30 30"><rect x="1" y="1" width="27" height="27" fill="none" stroke="#888"/><path d="M1 8 H28 M1 21 H28 M14 1 V8 M14 21 V28" stroke="#888"/><path d="M5 14.5 H24 M5 14.5 L9 11 M5 14.5 L9 18 M24 14.5 L20 11 M24 14.5 L20 18" fill="none" stroke="#3d7fc1" stroke-width="1.5"/></svg>
<div class="t" style="top:643.0px;font-size:30px;color:#555;font-weight:bold;-webkit-text-stroke:0.25px #555;left:945.0px;transform:scaleX(0.9229);">B</div>
<div class="t" style="top:643.0px;font-size:30px;color:#555;font-weight:bold;font-style:italic;font-family:'Liberation Serif', serif;-webkit-text-stroke:0.25px #555;left:990.0px;transform:scaleX(1.1979);">I</div>
<svg class="b" style="left:1030px;top:644px;" width="27" height="26" viewBox="0 0 27 26"><path d="M1 2 H26 M1 8 H26 M1 14 H26 M1 20 H26 M4 25 H23" stroke="#666" stroke-width="1.6"/></svg>
<svg class="b" style="left:1070px;top:640px;" width="36" height="36" viewBox="0 0 36 36"><path d="M8 14 L17 5 L27 15 L18 24 Z" fill="#fff" stroke="#666" stroke-width="1.5"/><path d="M17 5 V14" stroke="#666" stroke-width="1.3"/><circle cx="17" cy="14" r="1.5" fill="#666"/><path d="M27 15 Q31 18 30 23" fill="none" stroke="#3d7fc1" stroke-width="2.5"/><rect x="1" y="27" width="33" height="8" fill="#ffff00"/></svg>
<svg class="b" style="left:1117px;top:655px;" width="11" height="7" viewBox="0 0 11 7"><path d="M0 0 H10 L5 6 Z" fill="#666"/></svg>
<div class="t" style="top:638.0px;font-size:34px;color:#555;-webkit-text-stroke:0.25px #555;left:1140.0px;transform:scaleX(1.4105);">A</div>
<div class="b" style="left:1140px;top:667px;width:33px;height:8px;background:#ff0000;"></div>
<svg class="b" style="left:1185px;top:655px;" width="11" height="7" viewBox="0 0 11 7"><path d="M0 0 H10 L5 6 Z" fill="#666"/></svg>
<svg class="b" style="left:1208px;top:643px;" width="32" height="32" viewBox="0 0 32 32"><path d="M1 1 H30 V30 H1 Z M15.5 1 V30 M1 15.5 H30" fill="none" stroke="#999" stroke-dasharray="2 1.5"/></svg>
<svg class="b" style="left:1253px;top:655px;" width="11" height="7" viewBox="0 0 11 7"><path d="M0 0 H10 L5 6 Z" fill="#666"/></svg>
<svg class="b" style="left:1276px;top:642px;" width="36" height="34" viewBox="0 0 36 34"><path d="M2 9 H13 M2 9 L6.5 4.5 M2 9 L6.5 13.5" fill="none" stroke="#3d7fc1" stroke-width="2.6"/><text x="12" y="16" font-size="17" font-family="Liberation Sans" fill="#555">.0</text><text x="4" y="32" font-size="17" font-family="Liberation Sans" fill="#555">.00</text></svg>
<svg class="b" style="left:1320px;top:642px;" width="36" height="34" viewBox="0 0 36 34"><text x="4" y="16" font-size="17" font-family="Liberation Sans" fill="#555">.00</text><path d="M2 27 H13 M13 27 L8.5 22.5 M13 27 L8.5 31.5" fill="none" stroke="#3d7fc1" stroke-width="2.6"/><text x="13" y="32" font-size="17" font-family="Liberation Sans" fill="#555">.0</text></svg>
<svg class="b" style="left:1366px;top:644px;" width="30" height="30" viewBox="0 0 30 30"><path d="M2 18 L12 10 L20 18 L14 28 Q6 26 2 18 Z" fill="#efc77f"/><path d="M14 12 L22 4 L27 9 L19 17 Z" fill="#666"/></svg>
<div class="b" style="left:927px;top:716px;width:409px;height:640px;background:#fcfcfc;border:1px solid #c6c6c6;box-shadow:2px 2px 4px rgba(0,0,0,0.2)"></div>
<div class="b" style="left:987px;top:814px;width:347px;height:1px;background:#e1e1e1;"></div>
<div class="b" style="left:987px;top:866px;width:347px;height:1px;background:#e1e1e1;"></div>
<div class="b" style="left:987px;top:966px;width:347px;height:1px;background:#e1e1e1;"></div>
<div class="b" style="left:987px;top:1070px;width:347px;height:1px;background:#e1e1e1;"></div>
<div class="b" style="left:987px;top:1170px;width:347px;height:1px;background:#e1e1e1;"></div>
<div class="b" style="left:987px;top:1270px;width:347px;height:1px;background:#e1e1e1;"></div>
<div class="b" style="left:929px;top:970px;width:405px;height:48px;background:#c6c6c6;"></div>
<div class="t" style="top:731.0px;font-size:26px;color:#444;-webkit-text-stroke:0.25px #444;left:981.0px;transform:scaleX(0.7836);">コピー(<u>C</u>)</div>
<div class="t" style="top:778.0px;font-size:26px;color:#444;-webkit-text-stroke:0.25px #444;left:981.0px;transform:scaleX(0.8962);">セルの書式設定(<u>F</u>)...</div>
<div class="t" style="top:830.0px;font-size:26px;color:#444;-webkit-text-stroke:0.25px #444;left:981.0px;transform:scaleX(0.9532);">更新(<u>R</u>)</div>
<div class="t" style="top:882.0px;font-size:26px;color:#444;-webkit-text-stroke:0.25px #444;left:981.0px;transform:scaleX(0.8672);">並べ替え(<u>S</u>)</div>
<div class="t" style="top:930.0px;font-size:26px;color:#444;-webkit-text-stroke:0.25px #444;left:981.0px;transform:scaleX(0.7295);">フィルター(<u>T</u>)</div>
<div class="t" style="top:982.0px;font-size:26px;color:#444;-webkit-text-stroke:0.25px #444;left:981.0px;transform:scaleX(0.8734);">"商品コード" の小計(<u>B</u>)</div>
<div class="t" style="top:1034.0px;font-size:26px;color:#444;-webkit-text-stroke:0.25px #444;left:981.0px;transform:scaleX(0.8425);">展開/折りたたみ(<u>E</u>)</div>
<div class="t" style="top:1086.0px;font-size:26px;color:#444;-webkit-text-stroke:0.25px #444;left:981.0px;transform:scaleX(0.8375);">グループ化(<u>G</u>)...</div>
<div class="t" style="top:1134.0px;font-size:26px;color:#444;-webkit-text-stroke:0.25px #444;left:981.0px;transform:scaleX(0.8533);">グループ解除(<u>U</u>)...</div>
<div class="t" style="top:1185.0px;font-size:26px;color:#444;-webkit-text-stroke:0.25px #444;left:981.0px;transform:scaleX(0.9669);">移動(<u>M</u>)</div>
<div class="t" style="top:1234.0px;font-size:26px;color:#444;-webkit-text-stroke:0.25px #444;left:981.0px;transform:scaleX(0.8734);">"商品コード" の削除(<u>V</u>)</div>
<div class="t" style="top:1285.0px;font-size:26px;color:#444;-webkit-text-stroke:0.25px #444;left:981.0px;transform:scaleX(0.8013);">フィールドの設定(<u>N</u>)...</div>
<div class="t" style="top:1333.0px;font-size:26px;color:#444;-webkit-text-stroke:0.25px #444;left:981.0px;transform:scaleX(0.6723);">ピボットテーブル オプション(<u>O</u>)...</div>
<svg class="b" style="left:1307px;top:886px;" width="10" height="18" viewBox="0 0 10 18"><path d="M0 0 V17 L9 8.5 Z" fill="#666"/></svg>
<svg class="b" style="left:1307px;top:934px;" width="10" height="18" viewBox="0 0 10 18"><path d="M0 0 V17 L9 8.5 Z" fill="#666"/></svg>
<svg class="b" style="left:1307px;top:1038px;" width="10" height="18" viewBox="0 0 10 18"><path d="M0 0 V17 L9 8.5 Z" fill="#666"/></svg>
<svg class="b" style="left:1307px;top:1189px;" width="10" height="18" viewBox="0 0 10 18"><path d="M0 0 V17 L9 8.5 Z" fill="#666"/></svg>
<svg class="b" style="left:936px;top:727px;" width="30" height="32" viewBox="0 0 30 32"><path d="M1 1 H12 L16 5 V22 H1 Z" fill="#fff" stroke="#888"/><path d="M3 6 H13 M3 9 H13 M3 12 H13 M3 15 H13 M3 18 H13" stroke="#3d7fc1"/><path d="M10 9 H21 L26 14 V31 H10 Z" fill="#fff" stroke="#888"/><path d="M12 16 H24 M12 19 H24 M12 22 H24 M12 25 H24 M12 28 H24" stroke="#3d7fc1"/></svg>
<svg class="b" style="left:938px;top:776px;" width="27" height="28" viewBox="0 0 27 28"><rect x="1" y="1" width="24" height="26" fill="#fff" stroke="#777"/><rect x="1" y="1" width="24" height="4" fill="#4a7dbb"/><circle cx="5.5" cy="11" r="1.3" fill="none" stroke="#666"/><circle cx="5.5" cy="16" r="1.3" fill="none" stroke="#666"/><circle cx="5.5" cy="21" r="1.3" fill="none" stroke="#666"/><path d="M9 11 H22 M9 16 H22 M9 21 H22" stroke="#666"/></svg>
<svg class="b" style="left:938px;top:827px;" width="30" height="32" viewBox="0 0 30 32"><path d="M1 1 H14 L21 8 V28 H1 Z" fill="#fff" stroke="#888"/><path d="M14 1 V8 H21" fill="none" stroke="#888"/><circle cx="21" cy="25" r="8" fill="#fcfcfc"/><path d="M15 24 A6 6 0 0 1 26 21 M27 26 A6 6 0 0 1 16 29" fill="none" stroke="#6ea98a" stroke-width="2.6"/><path d="M24 17 L28 21 L23 23 Z M18 33 L14 29 L19 27 Z" fill="#6ea98a"/></svg>
<svg class="b" style="left:943px;top:985px;" width="18" height="16" viewBox="0 0 18 16"><path d="M2 8 L7 13 L16 2" fill="none" stroke="#555" stroke-width="3"/></svg>
<svg class="b" style="left:934px;top:1082px;" width="34" height="30" viewBox="0 0 34 30"><path d="M2 5 H10 M10 5 L7 2 M10 5 L7 8" fill="none" stroke="#6ea98a" stroke-width="1.6"/><path d="M15 3 H12 V27 H15" fill="none" stroke="#666"/><rect x="10" y="11" width="8" height="8" fill="#fff" stroke="#666"/><path d="M12 15 H16 M14 13 V17" stroke="#666"/><rect x="20" y="2" width="11" height="26" fill="#fff" stroke="#666"/><path d="M23 7 H28 M23 12 H28 M23 17 H28 M23 22 H28" stroke="#4a7dbb" stroke-width="1.4"/></svg>
<svg class="b" style="left:934px;top:1130px;" width="34" height="30" viewBox="0 0 34 30"><path d="M2 5 H10 M2 5 L5 2 M2 5 L5 8" fill="none" stroke="#6ea98a" stroke-width="1.6"/><rect x="10" y="11" width="8" height="8" fill="none" stroke="#d9442b" stroke-width="1.2"/><path d="M10 19 L18 11" stroke="#d9442b" stroke-width="1.2"/><path d="M15 3 H12 V27 H15" fill="none" stroke="#666"/><rect x="20" y="2" width="11" height="26" fill="#fff" stroke="#666"/><path d="M23 7 H28 M23 12 H28 M23 17 H28 M23 22 H28" stroke="#4a7dbb" stroke-width="1.4"/></svg>
<svg class="b" style="left:935px;top:1232px;" width="30" height="28" viewBox="0 0 30 28"><path d="M3 3 L27 25 M27 3 L3 25" stroke="#555" stroke-width="3.4" stroke-linecap="round"/></svg>
<svg class="b" style="left:936px;top:1283px;" width="30" height="30" viewBox="0 0 30 30"><rect x="1" y="1" width="24" height="23" fill="#fff" stroke="#888" stroke-width="1.2"/><rect x="3" y="3" width="5" height="19" fill="#aaa"/><rect x="9" y="3" width="14" height="5" fill="#aaa"/><circle cx="23" cy="23" r="6.5" fill="#3d7fc1"/><rect x="22.1" y="21" width="1.9" height="6" fill="#fff"/><circle cx="23" cy="18.8" r="1.1" fill="#fff"/></svg>
</body></html>
